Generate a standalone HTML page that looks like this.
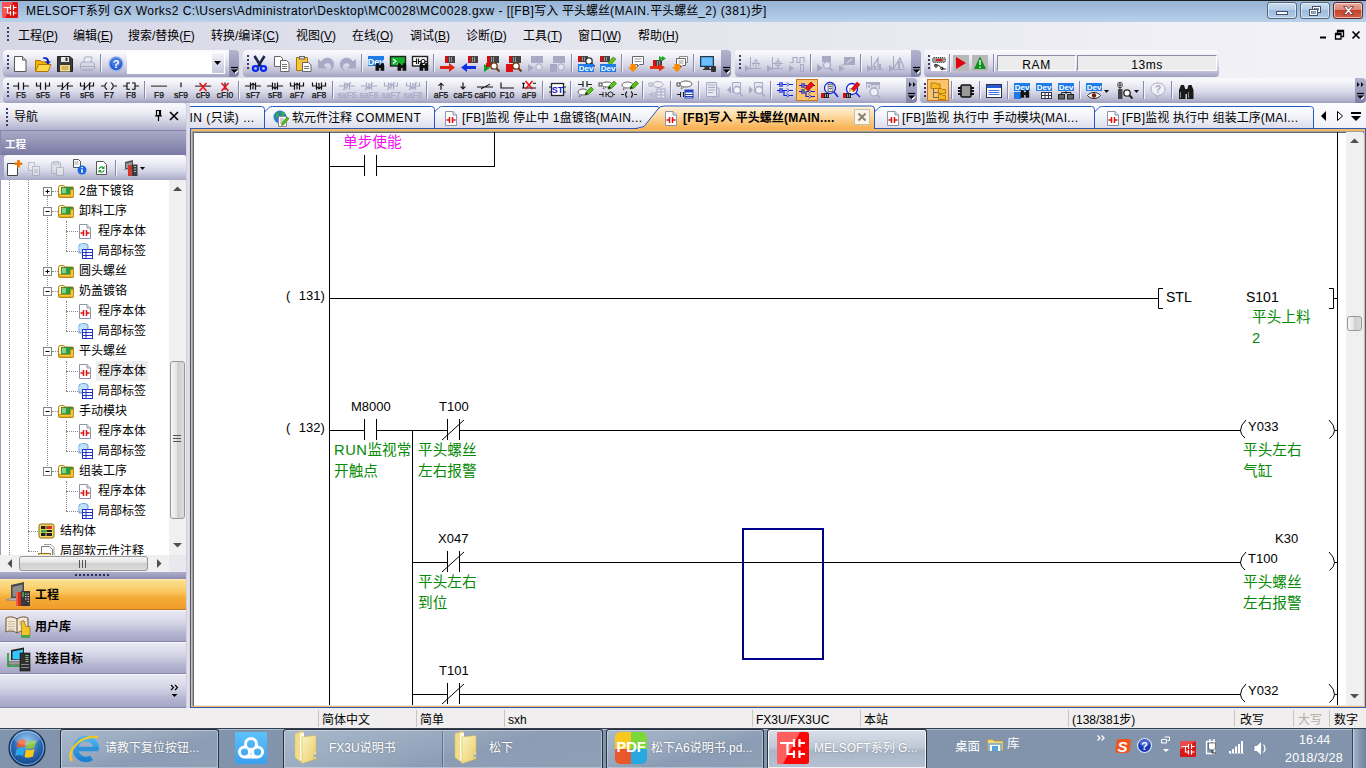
<!DOCTYPE html>
<html lang="zh-CN"><head><meta charset="utf-8"><title>MELSOFT GX Works2</title>
<style>
*{box-sizing:border-box;margin:0;padding:0}
html,body{width:1366px;height:768px;overflow:hidden;background:#e6e6f0}
body{font-family:"Liberation Sans","Noto Sans CJK SC",sans-serif;font-size:12px;color:#000;position:relative}
.a{position:absolute}
.t{position:absolute;white-space:nowrap;line-height:1}
svg{position:absolute;overflow:visible}
#title{left:0;top:0;width:1366px;height:22px;background:linear-gradient(#98b4d5 0,#9fbada 30%,#b9d1ea 100%);border-top:1px solid #1e1e1e}
#menu{left:0;top:22px;width:1366px;height:82px;background:linear-gradient(90deg,#d6d6e5 0,#e2e2ed 30%,#e7e7ef 60%,#efeff5 85%,#f2f2f7 100%)}
.mi{top:30px;font-size:12px}
.grip{width:3px;background-image:radial-gradient(circle at 1px 1px,#3c3c6c 0,#3c3c6c 1px,transparent 1.3px);background-size:3px 4px}
.tb{border-radius:4px 0 0 4px;background:linear-gradient(#fbfbfe 0,#eeeef6 25%,#d9d9e8 55%,#b8b8d2 85%,#9f9fc0 100%)}
.tbcap{border-radius:0 4px 4px 0;background:linear-gradient(#b4b4cf 0,#9d9dbe 50%,#7f7fa6 100%)}
.sep{width:1px;background:#8888aa;box-shadow:1px 0 0 #f4f4fa}

*{box-sizing:border-box;margin:0;padding:0}
html,body{width:1366px;height:768px;overflow:hidden;background:#e6e6f0}
body{font-family:"Liberation Sans","Noto Sans CJK SC",sans-serif;font-size:12px;color:#000;position:relative}
.a{position:absolute}
.t{position:absolute;white-space:nowrap;line-height:1}
svg{position:absolute;overflow:visible}
#title{left:0;top:0;width:1366px;height:22px;background:linear-gradient(#98b4d5 0,#9fbada 30%,#b9d1ea 100%);border-top:1px solid #1e1e1e}
#menu{left:0;top:22px;width:1366px;height:82px;background:linear-gradient(90deg,#d6d6e5 0,#e2e2ed 30%,#e7e7ef 60%,#efeff5 85%,#f2f2f7 100%)}
.mi{top:30px;font-size:12px}
.grip{width:3px;background-image:radial-gradient(circle at 1px 1px,#3c3c6c 0,#3c3c6c 1px,transparent 1.3px);background-size:3px 4px}
.tb{border-radius:4px 0 0 4px;background:linear-gradient(#fbfbfe 0,#eeeef6 25%,#d9d9e8 55%,#b8b8d2 85%,#9f9fc0 100%)}
.tbcap{border-radius:0 4px 4px 0;background:linear-gradient(#b4b4cf 0,#9d9dbe 50%,#7f7fa6 100%)}
.sep{width:1px;background:#8888aa;box-shadow:1px 0 0 #f4f4fa}

.cap svg{left:2px}
.fld{border:1px solid #8c8ca6;border-right-color:#fff;border-bottom-color:#fff;background:#ececec;font-size:12px;letter-spacing:.6px;text-align:center;line-height:17px;padding-top:1px}

.tab{border:1px solid #2458c0;border-radius:3px 3px 0 0;background:linear-gradient(#ffffff 0,#f4f4fa 40%,#dcdcec 100%)}
.tabt{font-size:12px;letter-spacing:.5px}

.tr{font-size:12px;height:20px;line-height:20px}
.vdot{border-left:1px dotted #8a8a8a;width:0}
.hdot{border-top:1px dotted #8a8a8a;height:0}
.nbtn{left:0;width:186px;height:32px;border-top:1px solid #f6f6fb;border-bottom:1px solid #8686a8;background:linear-gradient(#e9e9f3 0,#d4d4e6 40%,#b4b4d0 75%,#a5a5c5 100%)}
.nbt{font-size:13px;font-weight:bold}
.sbtn{background:linear-gradient(90deg,#f4f4f4,#dcdcdc);}

.lb{font-size:13px;color:#000}
.gc{font-size:14.67px;color:#058a05;letter-spacing:0;line-height:21px}

*{box-sizing:border-box;margin:0;padding:0}
html,body{width:1366px;height:768px;overflow:hidden;background:#e6e6f0}
body{font-family:"Liberation Sans","Noto Sans CJK SC",sans-serif;font-size:12px;color:#000;position:relative}
.a{position:absolute}
.t{position:absolute;white-space:nowrap;line-height:1}
svg{position:absolute;overflow:visible}
#title{left:0;top:0;width:1366px;height:22px;background:linear-gradient(#98b4d5 0,#9fbada 30%,#b9d1ea 100%);border-top:1px solid #1e1e1e}
#menu{left:0;top:22px;width:1366px;height:82px;background:linear-gradient(90deg,#d6d6e5 0,#e2e2ed 30%,#e7e7ef 60%,#efeff5 85%,#f2f2f7 100%)}
.mi{top:30px;font-size:12px}
.grip{width:3px;background-image:radial-gradient(circle at 1px 1px,#3c3c6c 0,#3c3c6c 1px,transparent 1.3px);background-size:3px 4px}
.tb{border-radius:4px 0 0 4px;background:linear-gradient(#fbfbfe 0,#eeeef6 25%,#d9d9e8 55%,#b8b8d2 85%,#9f9fc0 100%)}
.tbcap{border-radius:0 4px 4px 0;background:linear-gradient(#b4b4cf 0,#9d9dbe 50%,#7f7fa6 100%)}
.sep{width:1px;background:#8888aa;box-shadow:1px 0 0 #f4f4fa}

.tbtn{top:729px;height:39px;border:1px solid #27313f;border-bottom:none;border-radius:3px 3px 0 0;background:linear-gradient(165deg,#a9b8ca 0,#98a9bf 40%,#8b9cb4 60%,#8e9fb6 100%);box-shadow:inset 0 0 0 1px rgba(255,255,255,.35)}
.tt{color:#fff;font-size:12px;top:742px;text-shadow:0 0 2px rgba(0,0,0,.35)}
</style></head>
<body>
<!-- chrome.title -->
<div class="a" id="title"></div>
<svg style="left:2px;top:2px;" width="17" height="17" viewBox="0 0 17 17"><rect x="0" y="0" width="16" height="16" rx="1" fill="#e01010"/><path d="M0 0h11l-8 16h-3z" fill="#ff7070" opacity=".7"/><path d="M1.5 5.5h7M8.5 3v5M11.5 3v5M11.5 5.5h3M5.5 5.5v5.5h3M8.5 9v4.5M11.5 9v4.5M11.5 11h3" stroke="#fff" stroke-width="1.2" fill="none"/></svg>
<div class="t ttl" style="left:26px;top:5px;font-size:12px;color:#000;letter-spacing:.455px">MELSOFT<span style="letter-spacing:0">系列</span> GX Works2 C:\Users\Administrator\Desktop\MC0028\MC0028.gxw - [[FB]<span style="letter-spacing:0">写入</span> <span style="letter-spacing:0">平头螺丝</span>(MAIN.<span style="letter-spacing:0">平头螺丝</span>_2) (381)<span style="letter-spacing:0">步</span>]</div>
<div class="a " style="left:1267px;top:2px;width:30px;height:17px;background:linear-gradient(#c9dcf0 0,#b6cde8 45%,#9dbbdd 50%,#b3cce8 100%);border:1px solid #56667c;border-radius:3px;box-shadow:inset 0 0 0 1px rgba(255,255,255,.55)"></div>
<div class="a " style="left:1300px;top:2px;width:30px;height:17px;background:linear-gradient(#c9dcf0 0,#b6cde8 45%,#9dbbdd 50%,#b3cce8 100%);border:1px solid #56667c;border-radius:3px;box-shadow:inset 0 0 0 1px rgba(255,255,255,.55)"></div>
<div class="a " style="left:1333px;top:2px;width:30px;height:17px;background:linear-gradient(#e9a99b 0,#d9887a 45%,#c8402c 50%,#d4604a 100%);border:1px solid #5a2a2a;border-radius:3px;box-shadow:inset 0 0 0 1px rgba(255,255,255,.55)"></div>
<svg style="left:1267px;top:2px;" width="30" height="17" viewBox="0 0 30 17"><rect x="9.5" y="9.5" width="11" height="3" fill="#fff" stroke="#44506a" stroke-width="1"/></svg>
<svg style="left:1300px;top:2px;" width="30" height="17" viewBox="0 0 30 17"><rect x="12.5" y="4.500" width="8" height="6" fill="#fff" stroke="#44506a"/><rect x="14.5" y="6.500" width="4" height="2" fill="#a9c3e2" stroke="#44506a" stroke-width=".6"/><rect x="9.500" y="7.500" width="8" height="6" fill="#fff" stroke="#44506a"/><rect x="11.500" y="9.500" width="4" height="2" fill="#a9c3e2" stroke="#44506a" stroke-width=".6"/></svg>
<svg style="left:1333px;top:2px;" width="30" height="17" viewBox="0 0 30 17"><path d="M10.500 4.500l3 0l2 2.500l2-2.500l3 0l-3.500 4l3.500 4l-3 0l-2-2.500l-2 2.500l-3 0l3.500-4z" fill="#fff" stroke="#5a3030" stroke-width=".8"/></svg>
<!-- chrome.menu -->
<div class="a" id="menu"></div>
<div class="a grip" style="left:7px;top:27px;width:3px;height:16px;"></div>
<div class="t mi" style="left:18px;top:30px;font-size:12px;">工程(<u>P</u>)</div>
<div class="t mi" style="left:73px;top:30px;font-size:12px;">编辑(<u>E</u>)</div>
<div class="t mi" style="left:128px;top:30px;font-size:12px;">搜索/替换(<u>F</u>)</div>
<div class="t mi" style="left:211px;top:30px;font-size:12px;">转换/编译(<u>C</u>)</div>
<div class="t mi" style="left:296px;top:30px;font-size:12px;">视图(<u>V</u>)</div>
<div class="t mi" style="left:352px;top:30px;font-size:12px;">在线(<u>O</u>)</div>
<div class="t mi" style="left:410px;top:30px;font-size:12px;">调试(<u>B</u>)</div>
<div class="t mi" style="left:466px;top:30px;font-size:12px;">诊断(<u>D</u>)</div>
<div class="t mi" style="left:523px;top:30px;font-size:12px;">工具(<u>T</u>)</div>
<div class="t mi" style="left:578px;top:30px;font-size:12px;">窗口(<u>W</u>)</div>
<div class="t mi" style="left:638px;top:30px;font-size:12px;">帮助(<u>H</u>)</div>
<svg style="left:1316px;top:28px;" width="50" height="14" viewBox="0 0 50 14"><path d="M4 9.5h6" stroke="#000" stroke-width="2"/><path d="M19.5 5.5h5.500v5.500h-5.500zM19.500 6.500h5.500M21.500 5.500v-3h6v6h-2.500M21.500 3.500h6" fill="none" stroke="#000" stroke-width="1.300"/><path d="M36.5 3.5l7 7M43.5 3.5l-7 7" stroke="#000" stroke-width="1.700"/></svg>
<!-- toolbars.row1 -->
<div class="a tb" style="left:3px;top:50px;width:226px;height:27px;"></div><div class="a tbcap" style="left:229px;top:50px;width:10px;height:27px;"></div><svg style="left:231px;top:67px;" width="8" height="8" viewBox="0 0 8 8"><path d="M1 2.500h6l-3 3.500z" fill="#fff" transform="translate(.7,.9)"/><path d="M0 .5h7" stroke="#000" stroke-width="1.200"/><path d="M0 2.500h7l-3.500 3.500z" fill="#000"/></svg><div class="a grip" style="left:6.5px;top:55px;width:3px;height:16px;"></div>
<svg style="left:13px;top:56px;" width="16" height="16" viewBox="0 0 16 16"><path d="M1.500 .5h8l3.500 3.500v11.500h-11.500z" fill="#fff" stroke="#555"/><path d="M9.500 .5v3.500h3.500" fill="#ddd" stroke="#555"/></svg>
<svg style="left:35px;top:56px;" width="16" height="16" viewBox="0 0 16 16"><path d="M.5 15.500v-11h5l1.500 1.500h6v3" fill="#f5b400" stroke="#b07800"/><path d="M.5 15.500l3-7h12.500l-3 7z" fill="#ffd84a" stroke="#b07800"/><path d="M8 1.500c4-1 6 1 6 4h2l-3 3-3-3h2c0-2-1.500-3-4-2.500z" fill="#0020c0"/></svg>
<svg style="left:57px;top:56px;" width="16" height="16" viewBox="0 0 16 16"><path d="M.5 .5h12.500l2.500 2.500v12.500h-15z" fill="#3a3a3a" stroke="#222"/><rect x="4" y="1" width="8" height="5" fill="#e8e8e8"/><rect x="8.500" y="1.500" width="2" height="3.500" fill="#3a3a3a"/><rect x="3" y="9" width="10" height="6.500" fill="#f4dc8a"/><path d="M4.500 11h7M4.500 13h7" stroke="#b09040"/></svg>
<svg style="left:79px;top:56px;" width="16" height="16" viewBox="0 0 16 16"><path d="M4.500 6.500l1.500-5.500h7l-1.500 5.500" fill="#eee" stroke="#a9a9c6"/><path d="M1.500 7.500l2-1.500h10l2 1.500v5.500h-14z" fill="#d8d8e4" stroke="#a9a9c6"/><path d="M1.500 10.500h14M3 14.500h11" stroke="#a9a9c6"/></svg>
<div class="a sep" style="left:100px;top:54px;width:1px;height:18px;"></div>
<svg style="left:108px;top:56px;" width="16" height="16" viewBox="0 0 16 16"><circle cx="8" cy="8" r="7" fill="#2a5fd0" stroke="#9db8ea" stroke-width="1.500"/><circle cx="8" cy="6" r="5" fill="#5a8bea" opacity=".6"/><text x="8" y="12" font-size="11" font-weight="bold" text-anchor="middle" fill="#fff" font-family="Liberation Sans,sans-serif">?</text></svg>
<div class="a " style="left:127px;top:52px;width:98px;height:22px;background:#fff;"></div>
<div class="a " style="left:212px;top:53px;width:12px;height:20px;background:linear-gradient(#f4f4fa,#c4c4dc);"></div>
<svg style="left:214px;top:61px;" width="8" height="5" viewBox="0 0 8 5"><path d="M0 0h7l-3.500 4z" fill="#000"/></svg>
<div class="a tb" style="left:243px;top:50px;width:478px;height:27px;"></div><div class="a tbcap" style="left:721px;top:50px;width:10px;height:27px;"></div><svg style="left:723px;top:67px;" width="8" height="8" viewBox="0 0 8 8"><path d="M1 2.500h6l-3 3.500z" fill="#fff" transform="translate(.7,.9)"/><path d="M0 .5h7" stroke="#000" stroke-width="1.200"/><path d="M0 2.500h7l-3.500 3.500z" fill="#000"/></svg><div class="a grip" style="left:246.5px;top:55px;width:3px;height:16px;"></div>
<svg style="left:252px;top:56px;" width="16" height="16" viewBox="0 0 16 16"><path d="M2.5 0l6.5 10.5M12.5 0l-6.500 10.5" stroke="#1a2850" stroke-width="2.6"/><ellipse cx="3.5" cy="12.5" rx="2.6" ry="2.300" fill="none" stroke="#0828f0" stroke-width="2.2"/><ellipse cx="11.5" cy="12.5" rx="2.6" ry="2.300" fill="none" stroke="#0828f0" stroke-width="2.2"/></svg>
<svg style="left:274px;top:56px;" width="16" height="16" viewBox="0 0 16 16"><path d="M.5 .5h6l2 2v8h-8z" fill="#fff" stroke="#666"/><path d="M6.500 4.500h6l2.500 2.500v8.500h-8.500z" fill="#fff" stroke="#666"/><path d="M8 8.500h5M8 10.500h5M8 12.500h5" stroke="#777"/></svg>
<svg style="left:296px;top:56px;" width="16" height="16" viewBox="0 0 16 16"><path d="M.5 1.500h11v13h-11z" fill="#f7c440" stroke="#a87800"/><rect x="3.500" y=".5" width="5" height="2.500" fill="#ddd" stroke="#666"/><path d="M6.500 6.500h6l2.500 2.500v6.500h-8.500z" fill="#fff" stroke="#666"/><path d="M8 10.500h5M8 12.500h5" stroke="#777"/></svg>
<svg style="left:318px;top:56px;" width="16" height="16" viewBox="0 0 16 16"><path d="M0 3v9.5h9l-3-3c1.500-2.500 5-3 6.5-.5 1.200 2 .5 4-1 6 5-2.500 6-8 2.500-11.500-3.500-3-8.500-2-11 2z" fill="#a9a9c6"/></svg>
<svg style="left:340px;top:56px;" width="16" height="16" viewBox="0 0 16 16"><g transform="translate(16,0) scale(-1,1)"><path d="M0 3v9.5h9l-3-3c1.500-2.500 5-3 6.5-.5 1.200 2 .5 4-1 6 5-2.500 6-8 2.500-11.500-3.500-3-8.500-2-11 2z" fill="#a9a9c6"/></g></svg>
<div class="a sep" style="left:361px;top:54px;width:1px;height:18px;"></div>
<svg style="left:368px;top:56px;" width="16" height="16" viewBox="0 0 16 16"><rect x="0" y="0" width="16" height="10" fill="#1e7be8"/><text x="8.0" y="8.5" font-size="9" text-anchor="middle" fill="#fff" font-weight="bold" font-family="Liberation Sans,sans-serif">Dev</text><g transform="translate(7.5,6.5) scale(.92)"><path d="M0 9v-6l1-2.500h2l1 2.500v6zM5.500 9v-6l1-2.500h2l1 2.500v6zM3 3h4v3h-4z" fill="#111"/></g></svg>
<svg style="left:390px;top:56px;" width="16" height="16" viewBox="0 0 16 16"><rect x=".5" y=".5" width="15" height="9.500" fill="#12b02c" stroke="#222" stroke-width="1.400"/><path d="M3 3l3 2.200-3 2.200M7 8h4" stroke="#fff" fill="none" stroke-width="1.200"/><g transform="translate(7.5,6.5) scale(.92)"><path d="M0 9v-6l1-2.500h2l1 2.500v6zM5.500 9v-6l1-2.500h2l1 2.500v6zM3 3h4v3h-4z" fill="#111"/></g></svg>
<svg style="left:412px;top:56px;" width="16" height="16" viewBox="0 0 16 16"><rect x=".5" y=".5" width="15" height="9.500" fill="#fff" stroke="#222" stroke-width="1.400"/><path d="M1 5.500h3.500M4.500 2.500v5.500M6.500 2.500v5.500M6.500 5.500h2.500M13 5.500h2" stroke="#111" stroke-width="1.200"/><circle cx="11" cy="5.500" r="2" fill="none" stroke="#111" stroke-width="1.200"/><g transform="translate(7.5,6.5) scale(.92)"><path d="M0 9v-6l1-2.500h2l1 2.500v6zM5.500 9v-6l1-2.500h2l1 2.500v6zM3 3h4v3h-4z" fill="#111"/></g></svg>
<div class="a sep" style="left:433px;top:54px;width:1px;height:18px;"></div>
<svg style="left:440px;top:56px;" width="16" height="16" viewBox="0 0 16 16"><rect x="5" y="0" width="10" height="7" fill="#444"/><rect x="5" y="0" width="3" height="7" fill="#d01010"/><path d="M9.5 1v5M11.5 1v5" stroke="#999"/><path d="M0 10h9v-3l6 4.500-6 4.500v-3h-9z" fill="#e02010"/></svg>
<svg style="left:462px;top:56px;" width="16" height="16" viewBox="0 0 16 16"><rect x="6" y="0" width="10" height="7" fill="#444"/><rect x="6" y="0" width="3" height="7" fill="#d01010"/><path d="M10.5 1v5M12.5 1v5" stroke="#999"/><path d="M16 10h-9v-3l-6 4.500 6 4.500v-3h9z" fill="#1030e0" transform="translate(-2,0)"/></svg>
<svg style="left:484px;top:56px;" width="16" height="16" viewBox="0 0 16 16"><rect x="3" y="0" width="12" height="7" fill="#444"/><rect x="3" y="0" width="3" height="7" fill="#d01010"/><path d="M7.5 1v5M9.5 1v5" stroke="#999"/><path d="M0 8l6 4-6 4z" fill="#10a020"/><rect x="2" y="7" width="5" height="4" fill="#d01010"/><circle cx="10" cy="10" r="3.200" fill="#fff" stroke="#6a3a10" stroke-width="1.300"/><path d="M12.3 12.3l3.200 3.200" stroke="#6a3a10" stroke-width="2"/></svg>
<svg style="left:506px;top:56px;" width="16" height="16" viewBox="0 0 16 16"><rect x="3" y="0" width="12" height="7" fill="#444"/><rect x="3" y="0" width="3" height="7" fill="#d01010"/><path d="M7.5 1v5M9.5 1v5" stroke="#999"/><rect x="0" y="8" width="7" height="8" fill="#e01010"/><circle cx="10" cy="10" r="3.200" fill="#fff" stroke="#6a3a10" stroke-width="1.300"/><path d="M12.3 12.3l3.200 3.200" stroke="#6a3a10" stroke-width="2"/></svg>
<svg style="left:528px;top:56px;" width="16" height="16" viewBox="0 0 16 16"><rect x="3" y="0" width="12" height="7" fill="#a9a9c6"/><path d="M0 8l6 4-6 4z" fill="#a9a9c6"/><circle cx="11" cy="11" r="3.200" fill="#e4e4ee" stroke="#a9a9c6"/></svg>
<svg style="left:550px;top:56px;" width="16" height="16" viewBox="0 0 16 16"><rect x="3" y="0" width="12" height="7" fill="#a9a9c6"/><rect x="0" y="8" width="7" height="8" fill="#a9a9c6"/><circle cx="11" cy="11" r="3.200" fill="#e4e4ee" stroke="#a9a9c6"/></svg>
<div class="a sep" style="left:571px;top:54px;width:1px;height:18px;"></div>
<svg style="left:578px;top:56px;" width="16" height="16" viewBox="0 0 16 16"><rect x="0" y="0" width="10" height="6" fill="#444"/><rect x="0" y="0" width="3" height="6" fill="#d01010"/><path d="M4.5 1v4M6.5 1v4" stroke="#999"/><circle cx="11" cy="5" r="3.200" fill="#fff" stroke="#333" stroke-width="1.300"/><path d="M13.3 7.3l3.200 3.200" stroke="#333" stroke-width="2"/><rect x="0" y="8" width="16" height="8" fill="#1e7be8"/><text x="8.0" y="15" font-size="8" text-anchor="middle" fill="#fff" font-weight="bold" font-family="Liberation Sans,sans-serif">Dev</text></svg>
<svg style="left:600px;top:56px;" width="16" height="16" viewBox="0 0 16 16"><rect x="0" y="0" width="10" height="6" fill="#444"/><rect x="0" y="0" width="3" height="6" fill="#d01010"/><path d="M4.5 1v4M6.5 1v4" stroke="#999"/><path d="M8 7l5-6 3 2-5 6z" fill="#60c020" stroke="#3a8010" stroke-width=".6"/><rect x="0" y="8" width="16" height="8" fill="#1e7be8"/><text x="8.0" y="15" font-size="8" text-anchor="middle" fill="#fff" font-weight="bold" font-family="Liberation Sans,sans-serif">Dev</text></svg>
<div class="a sep" style="left:621px;top:54px;width:1px;height:18px;"></div>
<svg style="left:628px;top:56px;" width="16" height="16" viewBox="0 0 16 16"><path d="M4.500 .5h11v8h-4l-2 2v-2h-5z" fill="#fff" stroke="#666"/><path d="M6.500 3h7M6.500 5.500h7" stroke="#999"/><path d="M1 8h5v3h2.500l-5 5-5-5h2.500z" fill="#ff8a00" transform="translate(1.500,0)"/></svg>
<svg style="left:650px;top:56px;" width="16" height="16" viewBox="0 0 16 16"><rect x="3" y="4" width="9" height="7" fill="#444"/><rect x="3" y="4" width="3" height="7" fill="#d01010"/><path d="M7.5 5v5M9.5 5v5" stroke="#999"/><path d="M9 0l4 2.500-4 2.500zM12 0l4 2.500-4 2.500z" fill="#18a818"/><path d="M0 11h9v-2.500l6 4-6 4v-2.500h-9z" fill="#e83010" transform="translate(0,-1)"/></svg>
<svg style="left:672px;top:56px;" width="16" height="16" viewBox="0 0 16 16"><path d="M7.500 .5h8v6h-8z" fill="#fff" stroke="#888"/><path d="M4.500 2.500h9v7h-3l-2 2v-2h-4z" fill="#fff" stroke="#666"/><path d="M6.500 5h5M6.500 7h5" stroke="#999"/><path d="M1 8h5v3h2.500l-5 5-5-5h2.500z" fill="#ff8a00" transform="translate(1.500,0)"/></svg>
<div class="a sep" style="left:693px;top:54px;width:1px;height:18px;"></div>
<svg style="left:700px;top:56px;" width="16" height="16" viewBox="0 0 16 16"><rect x=".5" y=".5" width="13" height="10" fill="#3aa0f0" stroke="#333"/><rect x="2" y="2" width="10" height="7" fill="#6cc0ff"/><path d="M5 11h4v2h-4zM3 13.500h8" stroke="#333" fill="#333"/><rect x="11" y="10" width="5" height="6" rx="1" fill="#333"/></svg>
<div class="a tb" style="left:735px;top:50px;width:176px;height:27px;"></div><div class="a tbcap" style="left:911px;top:50px;width:10px;height:27px;"></div><svg style="left:913px;top:67px;" width="8" height="8" viewBox="0 0 8 8"><path d="M1 2.500h6l-3 3.500z" fill="#fff" transform="translate(.7,.9)"/><path d="M0 .5h7" stroke="#000" stroke-width="1.200"/><path d="M0 2.500h7l-3.500 3.500z" fill="#000"/></svg><div class="a grip" style="left:738.5px;top:55px;width:3px;height:16px;"></div>
<svg style="left:745px;top:56px;" width="16" height="16" viewBox="0 0 16 16"><path d="M0 9l5 3.500-5 3.500z" fill="#a9a9c6"/><path d="M5.500 1v13M3 12.500h13M7 7.500h8M11 3v9" stroke="#a9a9c6" fill="none"/><path d="M8 10c1-8 4-8 6 0" stroke="#a9a9c6" fill="none"/></svg>
<svg style="left:767px;top:56px;" width="16" height="16" viewBox="0 0 16 16"><path d="M0 9l5 3.500-5 3.500z" fill="#a9a9c6"/><path d="M5.500 1v13M3 12.500h13M6 7.500h10M11 2v10" stroke="#a9a9c6" fill="none"/><circle cx="11" cy="7.500" r="2.500" stroke="#a9a9c6" fill="none"/></svg>
<svg style="left:789px;top:56px;" width="16" height="16" viewBox="0 0 16 16"><path d="M0 9l5 3.500-5 3.500z" fill="#a9a9c6"/><path d="M1 6.500h3v-5h4v5h3v-5h4v5" stroke="#a9a9c6" fill="none" stroke-width="1.200"/><rect x="11.500" y="8.500" width="3" height="7" fill="none" stroke="#a9a9c6"/></svg>
<div class="a sep" style="left:810px;top:54px;width:1px;height:18px;"></div>
<svg style="left:817px;top:56px;" width="16" height="16" viewBox="0 0 16 16"><path d="M0 8l6 4-6 4z" fill="#a9a9c6"/><rect x="5" y="0" width="9" height="6" fill="#a9a9c6"/><circle cx="10" cy="9" r="3.500" fill="#e4e4ee" stroke="#a9a9c6" stroke-width="1.300"/><path d="M12.500 11.500l3 3.500" stroke="#a9a9c6" stroke-width="1.800"/></svg>
<svg style="left:839px;top:56px;" width="16" height="16" viewBox="0 0 16 16"><path d="M0 9l6 3.500-6 3.500z" fill="#a9a9c6"/><rect x="5" y="1" width="11" height="8" fill="#a9a9c6"/><path d="M8 7l5-4" stroke="#e8e8f0"/><path d="M2 9h4v-4" stroke="#a9a9c6" fill="none"/></svg>
<div class="a sep" style="left:860px;top:54px;width:1px;height:18px;"></div>
<svg style="left:867px;top:56px;" width="16" height="16" viewBox="0 0 16 16"><path d="M0 9l5 3.500-5 3.500z" fill="#a9a9c6"/><path d="M4.500 0v14M3 13.500h13" stroke="#a9a9c6"/><path d="M5 12l6-10v10" stroke="#a9a9c6" fill="none" stroke-width="1.300"/><path d="M8 10v3M13 8v5" stroke="#a9a9c6" stroke-width="2"/></svg>
<svg style="left:889px;top:56px;" width="16" height="16" viewBox="0 0 16 16"><path d="M0 9l5 3.500-5 3.500z" fill="#a9a9c6"/><path d="M4.500 0v14M3 13.500h13" stroke="#a9a9c6"/><path d="M5 12l6-10l4 10" stroke="#a9a9c6" fill="none" stroke-width="1.300"/><path d="M10 7v6" stroke="#a9a9c6" stroke-width="2"/><path d="M10 4l2 3h-4z" fill="#a9a9c6"/></svg>
<div class="a tb" style="left:924px;top:50px;width:295px;height:27px;border-radius:4px"></div><div class="a grip" style="left:927.5px;top:55px;width:3px;height:16px;"></div>
<svg style="left:931px;top:55px;" width="16" height="16" viewBox="0 0 16 16"><rect x="0" y="0" width="16" height="16" fill="#fff"/><rect x="1.500" y="2.500" width="13" height="5" rx="1.500" fill="#999" stroke="#444" stroke-dasharray="1 1"/><path d="M5 5h5" stroke="#e00000" stroke-width="1.500"/><path d="M9 3.500l3 1.500-3 1.500z" fill="#e00000"/><path d="M3 10h4l5 4h3" stroke="#222" fill="none"/><circle cx="5" cy="11" r="1.300" fill="none" stroke="#222"/><circle cx="11" cy="13.500" r="1.300" fill="none" stroke="#222"/></svg>
<div class="a sep" style="left:949px;top:54px;width:1px;height:18px;"></div>
<svg style="left:953px;top:55px;" width="16" height="16" viewBox="0 0 16 16"><rect width="16" height="16" fill="#b8b8b8"/><path d="M3 2l10 6-10 6z" fill="#e00010"/></svg>
<svg style="left:972px;top:55px;" width="16" height="16" viewBox="0 0 16 16"><rect width="16" height="16" fill="#b8b8b8"/><path d="M8 1.500l6 12.500h-12z" fill="#10901c"/><path d="M8 5v5M8 11.500v1.500" stroke="#e8ffe8" stroke-width="1.400"/></svg>
<div class="a sep" style="left:993px;top:54px;width:1px;height:18px;"></div>
<div class="a fld" style="left:997px;top:55px;width:79px;height:16px">RAM</div>
<div class="a fld" style="left:1077px;top:55px;width:140px;height:16px">13ms</div>
<!-- toolbars.row2 -->
<div class="a tb" style="left:3px;top:78px;width:903px;height:25px;"></div><div class="a tbcap" style="left:906px;top:78px;width:11px;height:25px;"></div><svg style="left:908px;top:93px;" width="8" height="8" viewBox="0 0 8 8"><path d="M1 2.500h6l-3 3.500z" fill="#fff" transform="translate(.7,.9)"/><path d="M0 .5h7" stroke="#000" stroke-width="1.200"/><path d="M0 2.500h7l-3.500 3.500z" fill="#000"/></svg><div class="a grip" style="left:6.5px;top:83px;width:3px;height:14px;"></div>
<svg style="left:909px;top:82px;" width="8" height="6" viewBox="0 0 8 6"><path d="M0 0l2.500 2.500-2.500 2.500zM4 0l2.500 2.500-2.500 2.500z" fill="#000"/></svg>
<svg style="left:13px;top:78px;" width="16" height="22" viewBox="0 0 16 22"><g transform="translate(0,4.500) scale(1,.8)" stroke="#111" fill="none" stroke-width="1.200"><path d="M0 4.500h5M5.500 0v9M10.500 0v9M11 4.500h5" /></g><text x="8" y="19.8" font-size="8.5" text-anchor="middle" fill="#111" stroke="#111" stroke-width=".25" font-family="Liberation Sans,sans-serif">F5</text></svg>
<svg style="left:35px;top:78px;" width="16" height="22" viewBox="0 0 16 22"><g transform="translate(0,4.500) scale(1,.8)" stroke="#111" fill="none" stroke-width="1.200"><path d="M1.500 0v4.500h4M5.500 0v9M10.500 0v9M10.500 4.500h4v-4.500" /></g><text x="8" y="19.8" font-size="8.5" text-anchor="middle" fill="#111" stroke="#111" stroke-width=".25" font-family="Liberation Sans,sans-serif">sF5</text></svg>
<svg style="left:57px;top:78px;" width="16" height="22" viewBox="0 0 16 22"><g transform="translate(0,4.500) scale(1,.8)" stroke="#111" fill="none" stroke-width="1.200"><path d="M0 4.500h5M5.500 0v9M10.500 0v9M11 4.500h5" /><path d="M4 9l8-9" /></g><text x="8" y="19.8" font-size="8.5" text-anchor="middle" fill="#111" stroke="#111" stroke-width=".25" font-family="Liberation Sans,sans-serif">F6</text></svg>
<svg style="left:79px;top:78px;" width="16" height="22" viewBox="0 0 16 22"><g transform="translate(0,4.500) scale(1,.8)" stroke="#111" fill="none" stroke-width="1.200"><path d="M1.500 0v4.500h4M5.500 0v9M10.500 0v9M10.500 4.500h4v-4.500" /><path d="M4 9l8-9" /></g><text x="8" y="19.8" font-size="8.5" text-anchor="middle" fill="#111" stroke="#111" stroke-width=".25" font-family="Liberation Sans,sans-serif">sF6</text></svg>
<svg style="left:101px;top:78px;" width="16" height="22" viewBox="0 0 16 22"><g transform="translate(0,4.500) scale(1,.8)" stroke="#111" fill="none" stroke-width="1.200"><path d="M0 4.500h3M6 0c-3 2.500-3 6.500 0 9M10 0c3 2.500 3 6.500 0 9M13 4.500h3" /></g><text x="8" y="19.8" font-size="8.5" text-anchor="middle" fill="#111" stroke="#111" stroke-width=".25" font-family="Liberation Sans,sans-serif">F7</text></svg>
<svg style="left:123px;top:78px;" width="16" height="22" viewBox="0 0 16 22"><g transform="translate(0,4.500) scale(1,.8)" stroke="#111" fill="none" stroke-width="1.200"><path d="M0 4.500h4M7 .5h-3v8h3M9 .5h3v8h-3M12 4.500h4" /></g><text x="8" y="19.8" font-size="8.5" text-anchor="middle" fill="#111" stroke="#111" stroke-width=".25" font-family="Liberation Sans,sans-serif">F8</text></svg>
<div class="a sep" style="left:144px;top:81px;width:1px;height:18px;"></div>
<svg style="left:151px;top:78px;" width="16" height="22" viewBox="0 0 16 22"><g transform="translate(0,4.500) scale(1,.8)" stroke="#111" fill="none" stroke-width="1.200"><path d="M0 4.500h16" /></g><text x="8" y="19.8" font-size="8.5" text-anchor="middle" fill="#111" stroke="#111" stroke-width=".25" font-family="Liberation Sans,sans-serif">F9</text></svg>
<svg style="left:173px;top:78px;" width="16" height="22" viewBox="0 0 16 22"><g transform="translate(0,4.500) scale(1,.8)" stroke="#111" fill="none" stroke-width="1.200"><path d="M8 0v6" /></g><text x="8" y="19.8" font-size="8.5" text-anchor="middle" fill="#111" stroke="#111" stroke-width=".25" font-family="Liberation Sans,sans-serif">sF9</text></svg>
<svg style="left:195px;top:78px;" width="16" height="22" viewBox="0 0 16 22"><g transform="translate(0,4.500) scale(1,.8)" stroke="#111" fill="none" stroke-width="1.200"><path d="M0 4.500h16" /></g><path d="M4.500 5l7 8M11.500 5l-7 8" stroke="#e81010" stroke-width="1.500"/><text x="8" y="19.8" font-size="8.5" text-anchor="middle" fill="#111" stroke="#111" stroke-width=".25" font-family="Liberation Sans,sans-serif">cF9</text></svg>
<svg style="left:217px;top:78px;" width="16" height="22" viewBox="0 0 16 22"><g transform="translate(0,4.500) scale(1,.8)" stroke="#111" fill="none" stroke-width="1.200"><path d="M8 0v9" /></g><path d="M4.500 5l7 8M11.500 5l-7 8" stroke="#e81010" stroke-width="1.500"/><text x="8" y="19.8" font-size="8.5" text-anchor="middle" fill="#111" stroke="#111" stroke-width=".25" font-family="Liberation Sans,sans-serif">cFI0</text></svg>
<div class="a sep" style="left:238px;top:81px;width:1px;height:18px;"></div>
<svg style="left:245px;top:78px;" width="16" height="22" viewBox="0 0 16 22"><g transform="translate(0,4.500) scale(1,.8)" stroke="#111" fill="none" stroke-width="1.200"><path d="M0 4.500h5M5.500 0v9M10.500 0v9M11 4.500h5" /><path d="M8 8.500v-7M6 3.500l2-2.500 2 2.500" /></g><text x="8" y="19.8" font-size="8.5" text-anchor="middle" fill="#111" stroke="#111" stroke-width=".25" font-family="Liberation Sans,sans-serif">sF7</text></svg>
<svg style="left:267px;top:78px;" width="16" height="22" viewBox="0 0 16 22"><g transform="translate(0,4.500) scale(1,.8)" stroke="#111" fill="none" stroke-width="1.200"><path d="M0 4.500h5M5.500 0v9M10.500 0v9M11 4.500h5" /><path d="M8 .5v7M6 5.500l2 2.500 2-2.500" /></g><text x="8" y="19.8" font-size="8.5" text-anchor="middle" fill="#111" stroke="#111" stroke-width=".25" font-family="Liberation Sans,sans-serif">sF8</text></svg>
<svg style="left:289px;top:78px;" width="16" height="22" viewBox="0 0 16 22"><g transform="translate(0,4.500) scale(1,.8)" stroke="#111" fill="none" stroke-width="1.200"><path d="M1.500 0v4.500h4M5.500 0v9M10.500 0v9M10.500 4.500h4v-4.500" /><path d="M8 8.500v-7M6 3.500l2-2.500 2 2.500" /></g><text x="8" y="19.8" font-size="8.5" text-anchor="middle" fill="#111" stroke="#111" stroke-width=".25" font-family="Liberation Sans,sans-serif">aF7</text></svg>
<svg style="left:311px;top:78px;" width="16" height="22" viewBox="0 0 16 22"><g transform="translate(0,4.500) scale(1,.8)" stroke="#111" fill="none" stroke-width="1.200"><path d="M1.500 0v4.500h4M5.500 0v9M10.500 0v9M10.500 4.500h4v-4.500" /><path d="M8 .5v7M6 5.500l2 2.500 2-2.500" /></g><text x="8" y="19.8" font-size="8.5" text-anchor="middle" fill="#111" stroke="#111" stroke-width=".25" font-family="Liberation Sans,sans-serif">aF8</text></svg>
<div class="a sep" style="left:332px;top:81px;width:1px;height:18px;"></div>
<svg style="left:339px;top:78px;" width="16" height="22" viewBox="0 0 16 22"><g transform="translate(0,4.500) scale(1,.8)" stroke="#a9a9c6" fill="none" stroke-width="1.200"><path d="M0 4.500h5M5.500 0v9M10.500 0v9M11 4.500h5" /><path d="M8 8.500v-7M6 3.500l2-2.500 2 2.500" /><path d="M4 9l8-9" /></g><text x="8" y="19.8" font-size="8.5" text-anchor="middle" fill="#a9a9c6" stroke="#a9a9c6" stroke-width=".25" font-family="Liberation Sans,sans-serif">saF5</text></svg>
<svg style="left:361px;top:78px;" width="16" height="22" viewBox="0 0 16 22"><g transform="translate(0,4.500) scale(1,.8)" stroke="#a9a9c6" fill="none" stroke-width="1.200"><path d="M0 4.500h5M5.500 0v9M10.500 0v9M11 4.500h5" /><path d="M8 .5v7M6 5.500l2 2.500 2-2.500" /><path d="M4 9l8-9" /></g><text x="8" y="19.8" font-size="8.5" text-anchor="middle" fill="#a9a9c6" stroke="#a9a9c6" stroke-width=".25" font-family="Liberation Sans,sans-serif">saF6</text></svg>
<svg style="left:383px;top:78px;" width="16" height="22" viewBox="0 0 16 22"><g transform="translate(0,4.500) scale(1,.8)" stroke="#a9a9c6" fill="none" stroke-width="1.200"><path d="M1.500 0v4.500h4M5.500 0v9M10.500 0v9M10.500 4.500h4v-4.500" /><path d="M8 8.500v-7M6 3.500l2-2.500 2 2.500" /><path d="M4 9l8-9" /></g><text x="8" y="19.8" font-size="8.5" text-anchor="middle" fill="#a9a9c6" stroke="#a9a9c6" stroke-width=".25" font-family="Liberation Sans,sans-serif">saF7</text></svg>
<svg style="left:405px;top:78px;" width="16" height="22" viewBox="0 0 16 22"><g transform="translate(0,4.500) scale(1,.8)" stroke="#a9a9c6" fill="none" stroke-width="1.200"><path d="M1.500 0v4.500h4M5.500 0v9M10.500 0v9M10.500 4.500h4v-4.500" /><path d="M8 .5v7M6 5.500l2 2.500 2-2.500" /><path d="M4 9l8-9" /></g><text x="8" y="19.8" font-size="8.5" text-anchor="middle" fill="#a9a9c6" stroke="#a9a9c6" stroke-width=".25" font-family="Liberation Sans,sans-serif">saF8</text></svg>
<div class="a sep" style="left:426px;top:81px;width:1px;height:18px;"></div>
<svg style="left:433px;top:78px;" width="16" height="22" viewBox="0 0 16 22"><g transform="translate(0,4.500) scale(1,.8)" stroke="#111" fill="none" stroke-width="1.200"><path d="M8 9v-8M5.500 4l2.500-3 2.500 3" /></g><text x="8" y="19.8" font-size="8.5" text-anchor="middle" fill="#111" stroke="#111" stroke-width=".25" font-family="Liberation Sans,sans-serif">aF5</text></svg>
<svg style="left:455px;top:78px;" width="16" height="22" viewBox="0 0 16 22"><g transform="translate(0,4.500) scale(1,.8)" stroke="#111" fill="none" stroke-width="1.200"><path d="M8 0v8M5.500 5l2.500 3 2.500-3" /></g><text x="8" y="19.8" font-size="8.5" text-anchor="middle" fill="#111" stroke="#111" stroke-width=".25" font-family="Liberation Sans,sans-serif">caF5</text></svg>
<svg style="left:477px;top:78px;" width="16" height="22" viewBox="0 0 16 22"><g transform="translate(0,4.500) scale(1,.8)" stroke="#111" fill="none" stroke-width="1.200"><path d="M0 5.500h16M4 8l9-6" /></g><text x="8" y="19.8" font-size="8.5" text-anchor="middle" fill="#111" stroke="#111" stroke-width=".25" font-family="Liberation Sans,sans-serif">caFI0</text></svg>
<svg style="left:499px;top:78px;" width="16" height="22" viewBox="0 0 16 22"><g transform="translate(0,4.500) scale(1,.8)" stroke="#111" fill="none" stroke-width="1.200"><path d="M2 0v7h13" /></g><text x="8" y="19.8" font-size="8.5" text-anchor="middle" fill="#111" stroke="#111" stroke-width=".25" font-family="Liberation Sans,sans-serif">F10</text></svg>
<svg style="left:521px;top:78px;" width="16" height="22" viewBox="0 0 16 22"><g transform="translate(0,4.500) scale(1,.8)" stroke="#111" fill="none" stroke-width="1.200"><path d="M1 1h3M2.500 1v6M12 1h3M1 7h14" /></g><path d="M4.500 3l7 8M11.500 3l-7 8" stroke="#e81010" stroke-width="1.500"/><text x="8" y="19.8" font-size="8.5" text-anchor="middle" fill="#111" stroke="#111" stroke-width=".25" font-family="Liberation Sans,sans-serif">aF9</text></svg>
<div class="a sep" style="left:542px;top:81px;width:1px;height:18px;"></div>
<svg style="left:549px;top:79px;" width="16" height="22" viewBox="0 0 16 22"><rect x="2.500" y="4.500" width="12" height="12" fill="#fff" stroke="#222" stroke-width="1.300"/><path d="M0 8h2.500M0 13h2.500M14.500 8h2.500M14.500 13h2.500" stroke="#222"/><text x="8.500" y="14" font-size="9" font-weight="bold" text-anchor="middle" fill="#1020e0" font-family="Liberation Sans,sans-serif">ST</text></svg>
<div class="a sep" style="left:570px;top:81px;width:1px;height:18px;"></div>
<svg style="left:577px;top:79px;" width="16" height="22" viewBox="0 0 16 22"><path d="M1 6.500h5M6 3v6M10 3v6M10 6.500h5" stroke="#222" stroke-width="1.200" fill="none" transform="translate(0,-1)"/><ellipse cx="6.0" cy="13.0" rx="5.0" ry="3.0" fill="#fff" stroke="#666"/><path d="M3 15.5l-1 2.500 3-2" fill="#fff" stroke="#666" stroke-width=".8"/><g transform="translate(8,9)"><path d="M0 7l1-3 5-5 2.500 2.500-5 5z" fill="#58c018" stroke="#2c7c08" stroke-width=".7"/><path d="M0 7l1-3 2 2z" fill="#222"/></g></svg>
<svg style="left:599px;top:79px;" width="16" height="22" viewBox="0 0 16 22"><rect x="0" y="4" width="3" height="3" fill="#fff" stroke="#222" stroke-width=".8"/><ellipse cx="8.0" cy="5.5" rx="5.0" ry="2.5" fill="#fff" stroke="#666"/><path d="M5 7.5l-1 2.500 3-2" fill="#fff" stroke="#666" stroke-width=".8"/><g transform="translate(9,3)"><path d="M0 7l1-3 5-5 2.500 2.500-5 5z" fill="#58c018" stroke="#2c7c08" stroke-width=".7"/><path d="M0 7l1-3 2 2z" fill="#222"/></g><path d="M0 15.500h4M4 13v5M7 13v5M7 15.500h2M14 15.500h2" stroke="#222" fill="none"/><ellipse cx="11.500" cy="15.500" rx="2.500" ry="2.500" fill="none" stroke="#222"/></svg>
<svg style="left:621px;top:79px;" width="16" height="22" viewBox="0 0 16 22"><ellipse cx="6.5" cy="6.0" rx="5.5" ry="3.0" fill="#fff" stroke="#666"/><path d="M3 8.5l-1 2.500 3-2" fill="#fff" stroke="#666" stroke-width=".8"/><g transform="translate(9,3)"><path d="M0 7l1-3 5-5 2.500 2.500-5 5z" fill="#58c018" stroke="#2c7c08" stroke-width=".7"/><path d="M0 7l1-3 2 2z" fill="#222"/></g><path d="M0 15.500h3M13 15.500h3M6 12.500c-2 2-2 4 0 6M10 12.500c2 2 2 4 0 6" stroke="#222" fill="none" stroke-width="1.200"/></svg>
<div class="a sep" style="left:642px;top:81px;width:1px;height:18px;"></div>
<svg style="left:649px;top:79px;" width="16" height="22" viewBox="0 0 16 22"><rect x="0" y="4" width="3" height="3" fill="none" stroke="#a9a9c6"/><ellipse cx="9" cy="5.500" rx="5" ry="3" fill="#eee" stroke="#a9a9c6"/><path d="M0 15.500h3M3 13v5M6 13v5" stroke="#a9a9c6"/><rect x="8" y="10" width="8" height="9" fill="#e8e8f0" stroke="#a9a9c6"/><path d="M8 13h8M8 16h8M12 10v9" stroke="#a9a9c6"/></svg>
<div class="a sep" style="left:670px;top:81px;width:1px;height:18px;"></div>
<svg style="left:677px;top:79px;" width="16" height="22" viewBox="0 0 16 22"><rect x="0" y="4" width="3" height="3" fill="#fff" stroke="#222" stroke-width=".8"/><ellipse cx="9.0" cy="5.0" rx="6.0" ry="3.0" fill="#fff" stroke="#666"/><path d="M5 7.5l-1 2.500 3-2" fill="#fff" stroke="#666" stroke-width=".8"/><path d="M0 15.500h3M3.500 13v5M6.500 13v5" stroke="#222"/><rect x="8" y="11" width="8" height="8" fill="#fff" stroke="#2040c0"/><rect x="8" y="11" width="8" height="2.500" fill="#2040c0"/><path d="M8 15.500h8M8 17.500h8" stroke="#2040c0"/></svg>
<div class="a sep" style="left:698px;top:81px;width:1px;height:18px;"></div>
<svg style="left:705px;top:79px;" width="16" height="22" viewBox="0 0 16 22"><path d="M1.500 3.500h10v14h-10z" fill="#e8e8f0" stroke="#a9a9c6"/><path d="M3 6h7M3 8.500h7M3 11h7M3 13.500h5" stroke="#a9a9c6"/><path d="M11 9h3v9h-7" stroke="#a9a9c6" fill="none"/></svg>
<svg style="left:727px;top:79px;" width="16" height="22" viewBox="0 0 16 22"><path d="M0 11l4-4v8z" fill="#a9a9c6"/><path d="M5.500 3.500h8v10h-8z" fill="#e8e8f0" stroke="#a9a9c6"/><circle cx="10" cy="11" r="3.500" fill="#f2f2f8" stroke="#a9a9c6" stroke-width="1.300"/><path d="M12.500 13.500l3 4" stroke="#a9a9c6" stroke-width="1.600"/></svg>
<svg style="left:749px;top:79px;" width="16" height="22" viewBox="0 0 16 22"><path d="M0 7l4 4-4 4z" fill="#a9a9c6"/><path d="M5.500 3.500h8v10h-8z" fill="#e8e8f0" stroke="#a9a9c6"/><circle cx="10" cy="11" r="3.500" fill="#f2f2f8" stroke="#a9a9c6" stroke-width="1.300"/><path d="M12.500 13.500l3 4" stroke="#a9a9c6" stroke-width="1.600"/></svg>
<div class="a sep" style="left:770px;top:81px;width:1px;height:18px;"></div>
<svg style="left:777px;top:79px;" width="16" height="22" viewBox="0 0 16 22"><g stroke="#1020e0" fill="none" stroke-width="1.200"><path d="M0 5.500h3M3 3v5M5 3v5M5 5.500h3M8 5.500h2M12 5.500h4M0 11.500h3M3 9v5M5 9v5M5 11.500h5M12 11.500h4M7 11.500v5h3M12 16.500h4" /><path d="M10 3.500l2 2-2 2M10 9.500l2 2-2 2M10 14.500l2 2-2 2" stroke-width="1"/></g></svg>
<div class="a " style="left:796px;top:79px;width:22px;height:22px;background:#fbc46c;border:1px solid #c8761c"></div>
<svg style="left:799px;top:79px;" width="16" height="22" viewBox="0 0 16 22"><g stroke="#1020e0" fill="none" stroke-width="1.200"><path d="M0 6.500h3M3 4v5M5 4v5M5 6.500h3M12 6.500h4M0 12.500h3M3 10v5M5 10v5M5 12.500h5M12 12.500h4M7 12.500v5h3M12 17.500h4"/><path d="M10 10.500l2 2-2 2M10 15.500l2 2-2 2" stroke-width="1"/></g><path d="M6 9l6-6 3 3-6 6z" fill="#e81010" stroke="#900" stroke-width=".6"/><path d="M6 9l-1 4 4-1z" fill="#ffe070" stroke="#333" stroke-width=".5"/></svg>
<svg style="left:821px;top:79px;" width="16" height="22" viewBox="0 0 16 22"><circle cx="9" cy="9" r="5.500" fill="#fff" stroke="#1020e0" stroke-width="1.300"/><path d="M13 13l4 5" stroke="#1020e0" stroke-width="1.500"/><path d="M7 5.500h5v7h-5z" fill="#ddd" stroke="#555" stroke-width=".8"/><path d="M8 7.500h3M8 9.500h3" stroke="#555" stroke-width=".8"/><rect x="0" y="14" width="8" height="5" fill="#222"/><rect x="0" y="14" width="3" height="5" fill="#d01010"/><path d="M4.5 15v3M6.5 15v3" stroke="#999"/></svg>
<svg style="left:843px;top:79px;" width="16" height="22" viewBox="0 0 16 22"><circle cx="9" cy="10" r="5.500" fill="#fff" stroke="#1020e0" stroke-width="1.300"/><path d="M13 14l4 4" stroke="#1020e0" stroke-width="1.500"/><path d="M6 12h5M6 10h4" stroke="#555" stroke-width=".8"/><path d="M8 10l6-7 3 2.500-6 7z" fill="#e81010" stroke="#900" stroke-width=".5"/><path d="M8 10l-.5 3 3-1z" fill="#ffe070"/><rect x="0" y="14" width="8" height="5" fill="#222"/><rect x="0" y="14" width="3" height="5" fill="#d01010"/><path d="M4.5 15v3M6.5 15v3" stroke="#999"/></svg>
<svg style="left:865px;top:79px;" width="16" height="22" viewBox="0 0 16 22"><rect x="1" y="3" width="14" height="7" fill="#a9a9c6"/><text x="8" y="9.500" font-size="7" font-weight="bold" fill="#eee" text-anchor="middle" font-family="Liberation Sans,sans-serif">Dev</text><circle cx="9" cy="13" r="4" fill="#eeeef6" stroke="#a9a9c6" stroke-width="1.300"/><path d="M12 16l3.500 3.500" stroke="#a9a9c6" stroke-width="1.600"/></svg>
<div class="a tb" style="left:920px;top:78px;width:435px;height:25px;"></div><div class="a tbcap" style="left:1355px;top:78px;width:11px;height:25px;"></div><svg style="left:1357px;top:93px;" width="8" height="8" viewBox="0 0 8 8"><path d="M1 2.500h6l-3 3.500z" fill="#fff" transform="translate(.7,.9)"/><path d="M0 .5h7" stroke="#000" stroke-width="1.200"/><path d="M0 2.500h7l-3.500 3.500z" fill="#000"/></svg><div class="a grip" style="left:923.5px;top:83px;width:3px;height:14px;"></div>
<svg style="left:1357px;top:82px;" width="8" height="6" viewBox="0 0 8 6"><path d="M0 0l2.500 2.500-2.500 2.500zM4 0l2.500 2.500-2.500 2.500z" fill="#000"/></svg>
<div class="a " style="left:927px;top:79px;width:22px;height:22px;background:#fbc46c;border:1px solid #c8761c"></div>
<svg style="left:930px;top:80px;" width="16" height="22" viewBox="0 0 16 22"><path d="M3.500 8v9.500h6M3.500 12.500h6" stroke="#666" fill="none"/><path d="M1 3h5l1 1h3v4.500h-9z" fill="#f6b820" stroke="#a87000" stroke-width=".8"/><path d="M8.500 9.500h3l1 1h3v4h-7z" fill="#f6b820" stroke="#a87000" stroke-width=".8" transform="translate(0,-1)"/><path d="M8.500 14.500h3l1 1h3v4h-7z" fill="#f6b820" stroke="#a87000" stroke-width=".8"/></svg>
<div class="a sep" style="left:951px;top:81px;width:1px;height:18px;"></div>
<svg style="left:958px;top:80px;" width="16" height="22" viewBox="0 0 16 22"><rect x="3" y="5" width="10" height="12" rx="1.500" fill="#9a9a9a" stroke="#111" stroke-width="1.600"/><path d="M0 8h3M0 11h3M0 14h3M13 8h3M13 11h3M13 14h3" stroke="#111" stroke-width="1.800"/></svg>
<div class="a sep" style="left:979px;top:81px;width:1px;height:18px;"></div>
<svg style="left:986px;top:80px;" width="16" height="22" viewBox="0 0 16 22"><rect x=".5" y="4.500" width="15" height="13" fill="#fff" stroke="#334"/><rect x="1" y="5" width="14" height="3" fill="#2858d8"/><path d="M2.500 10.500h11M2.500 12.500h11M2.500 14.500h11" stroke="#4878e8"/></svg>
<div class="a sep" style="left:1007px;top:81px;width:1px;height:18px;"></div>
<svg style="left:1014px;top:80px;" width="16" height="22" viewBox="0 0 16 22"><rect x="0" y="3" width="16" height="8" fill="#1e7be8"/><text x="8.0" y="10" font-size="8" text-anchor="middle" fill="#fff" font-weight="bold" font-family="Liberation Sans,sans-serif">Dev</text><rect x="0" y="12" width="7" height="7" fill="#1e7be8"/><g transform="translate(6.5,9.5) scale(.92)"><path d="M0 9v-6l1-2.500h2l1 2.500v6zM5.500 9v-6l1-2.500h2l1 2.500v6zM3 3h4v3h-4z" fill="#111"/></g></svg>
<svg style="left:1036px;top:80px;" width="16" height="22" viewBox="0 0 16 22"><rect x="0" y="3" width="16" height="8" fill="#1e7be8"/><text x="8.0" y="10" font-size="8" text-anchor="middle" fill="#fff" font-weight="bold" font-family="Liberation Sans,sans-serif">Dev</text><rect x="5.500" y="12.500" width="10" height="6" fill="#fff" stroke="#334"/><path d="M5.500 15.500h10M9 12.500v6M12.500 12.500v6" stroke="#334"/></svg>
<svg style="left:1058px;top:80px;" width="16" height="22" viewBox="0 0 16 22"><rect x="0" y="3" width="16" height="8" fill="#1e7be8"/><text x="8.0" y="10" font-size="8" text-anchor="middle" fill="#fff" font-weight="bold" font-family="Liberation Sans,sans-serif">Dev</text><path d="M8 11v3M3.500 14v-1.500h9.500v1.500" stroke="#222" fill="none"/><rect x=".5" y="14.500" width="6" height="4.500" fill="#666" stroke="#222"/><rect x="9.500" y="14.500" width="6" height="4.500" fill="#666" stroke="#222"/></svg>
<div class="a sep" style="left:1079px;top:81px;width:1px;height:18px;"></div>
<svg style="left:1086px;top:80px;" width="24" height="22" viewBox="0 0 24 22"><rect x="0" y="3" width="16" height="8" fill="#1e7be8"/><text x="8.0" y="10" font-size="8" text-anchor="middle" fill="#fff" font-weight="bold" font-family="Liberation Sans,sans-serif">Dev</text><path d="M1.500 15.500c3-4 10-4 13 0c-3 4-10 4-13 0z" fill="#fff" stroke="#222"/><circle cx="8" cy="15.500" r="2.200" fill="#7a1a00"/><path d="M18 10h5l-2.500 3z" fill="#111"/></svg>
<svg style="left:1116px;top:80px;" width="24" height="22" viewBox="0 0 24 22"><path d="M4 3v6M1 5h6M1.500 3.500c2-1.500 3.500-1.500 5 0M1.500 6.500c2 1.500 3.500 1.500 5 0" stroke="#333" fill="none"/><rect x="2" y="9" width="4.500" height="10" fill="#444"/><circle cx="11" cy="13" r="3.200" fill="#fff" stroke="#222" stroke-width="1.300"/><path d="M13.3 15.3l3.200 3.200" stroke="#222" stroke-width="2"/><path d="M18 10h5l-2.500 3z" fill="#111"/></svg>
<div class="a sep" style="left:1143px;top:81px;width:1px;height:18px;"></div>
<svg style="left:1150px;top:80px;" width="16" height="22" viewBox="0 0 16 22"><path d="M8 3c4 0 7 2.500 7 6s-3 6-6 6l-2 3v-3c-3-.5-6-2.500-6-6s3-6 7-6z" fill="#f0f0f6" stroke="#a9a9c6"/><text x="8" y="13" font-size="10" font-weight="bold" fill="#a9a9c6" text-anchor="middle" font-family="Liberation Sans,sans-serif">?</text></svg>
<div class="a sep" style="left:1171px;top:81px;width:1px;height:18px;"></div>
<svg style="left:1178px;top:80px;" width="16" height="22" viewBox="0 0 16 22"><path d="M1 19v-9l2-5h3l1.500 5v9zM9 19v-9l1.500-5h3l2 5v9zM6 9h4v5h-4z" fill="#1a1a1a"/><path d="M2.500 12v6M10.500 12v6" stroke="#888"/></svg>
<!-- tabs.tabs -->
<div class="a " style="left:186px;top:103px;width:1180px;height:26px;background:linear-gradient(#fdfdff,#f0f0f8);"></div>
<div class="a " style="left:186px;top:103px;width:4px;height:605px;background:linear-gradient(90deg,#c9c9dc,#e6e6f0 50%,#d0d0e2);"></div>
<svg style="left:0px;top:0px;" width="1366" height="130" viewBox="0 0 1366 130"><defs><linearGradient id="tg" x1="0" y1="0" x2="0" y2="1"><stop offset="0" stop-color="#fff"/><stop offset=".4" stop-color="#f4f4fa"/><stop offset="1" stop-color="#dcdcec"/></linearGradient></defs><path d="M181 128.5V112L185.5 107.5Q186.5 106.5 189 106.5H261.5Q264.5 106.5 264.5 109.5V128.5ZM264.5 128.5V112L269.0 107.5Q270.0 106.5 272.5 106.5H431.5Q434.5 106.5 434.5 109.5V128.5ZM434.5 128.5V112L439.0 107.5Q440.0 106.5 442.5 106.5H657Q660 106.5 660 109.5V128.5ZM874.5 128.5V112L879.0 107.5Q880.0 106.5 882.5 106.5H1091.5Q1094.5 106.5 1094.5 109.5V128.5ZM1094.5 128.5V112L1099.0 107.5Q1100.0 106.5 1102.5 106.5H1310.5Q1313.5 106.5 1313.5 109.5V128.5Z" fill="url(#tg)" transform="translate(0,-106) scale(1,1) translate(0,106)"/><path d="M181 128.5V112L185.5 107.5Q186.5 106.5 189 106.5H261.5Q264.5 106.5 264.5 109.5V128.5M264.5 128.5V112L269.0 107.5Q270.0 106.5 272.5 106.5H431.5Q434.5 106.5 434.5 109.5V128.5M434.5 128.5V112L439.0 107.5Q440.0 106.5 442.5 106.5H657Q660 106.5 660 109.5V128.5M874.5 128.5V112L879.0 107.5Q880.0 106.5 882.5 106.5H1091.5Q1094.5 106.5 1094.5 109.5V128.5M1094.5 128.5V112L1099.0 107.5Q1100.0 106.5 1102.5 106.5H1310.5Q1313.5 106.5 1313.5 109.5V128.5M181 128.5H1313.5" fill="none" stroke="#2458c0"/></svg>
<svg style="left:636px;top:105px;" width="240" height="24" viewBox="0 0 240 24"><defs><linearGradient id="og" x1="0" y1="0" x2="0" y2="1"><stop offset="0" stop-color="#fff3dc"/><stop offset=".45" stop-color="#fdd9a0"/><stop offset="1" stop-color="#f9b050"/></linearGradient></defs><path d="M0 24l8-2l14-18q2-3 6-3h207.5q3 0 3 3v20z" fill="url(#og)"/><path d="M0 23.500l8-2l14-17.500q2-3 6-3h207.5q3 0 3 3v20" fill="none" stroke="#2458c0" stroke-width="1"/></svg>
<div class="t tabt" style="left:181px;top:112px;font-size:12px;">AIN (<span style="letter-spacing:0">只读</span>) ...</div>
<div class="a " style="left:176px;top:104px;width:10px;height:26px;background:#e6e6f0;"></div>
<div class="a " style="left:186px;top:103px;width:4px;height:27px;background:linear-gradient(90deg,#c9c9dc,#e6e6f0 50%,#d0d0e2);"></div>
<svg style="left:273px;top:110px;" width="16" height="17" viewBox="0 0 16 17"><circle cx="7" cy="7" r="6.500" fill="#2a78d8"/><path d="M3 3c2-1 3 1 2 3s-3 1-3 3M8 1c2 1 4 2 3 4s-2 0-3 2 2 3 1 5" fill="#38b038" stroke="#38b038"/><path d="M5.500 6.500h8v10h-8z" fill="#fff" stroke="#889"/><path d="M7 9h4M7 11h4M7 13h3" stroke="#888" stroke-width=".8"/><path d="M9 13l5-6 2 1.500-5 6-2.500 1z" fill="#58c018" stroke="#2c7c08" stroke-width=".6"/></svg>
<div class="t tabt" style="left:292px;top:112px;font-size:12px;"><span style="letter-spacing:0">软元件注释</span> COMMENT</div>
<svg style="left:445px;top:111px;" width="12" height="15" viewBox="0 0 12 15"><path d="M.5 .5h7.500l3.500 3.500v10.500h-11z" fill="#fff" stroke="#8a94ac"/><path d="M8 .5v3.500h3.500" fill="#dde" stroke="#8a94ac"/><path d="M1.500 9h2.500M4.500 6v6M7.500 6v6M8 9h2.500" stroke="#e01010" stroke-width="1.500" fill="none"/></svg>
<div class="t tabt" style="left:462px;top:112px;font-size:12px;letter-spacing:.33px">[FB]<span style="letter-spacing:0">监视</span> <span style="letter-spacing:0">停止中</span> 1<span style="letter-spacing:0">盘镀铬</span>(MAIN...</div>
<svg style="left:665px;top:111px;" width="12" height="15" viewBox="0 0 12 15"><path d="M.5 .5h7.500l3.500 3.500v10.500h-11z" fill="#fff" stroke="#8a94ac"/><path d="M8 .5v3.500h3.500" fill="#dde" stroke="#8a94ac"/><path d="M1.500 9h2.500M4.500 6v6M7.500 6v6M8 9h2.500" stroke="#e01010" stroke-width="1.500" fill="none"/></svg>
<div class="t tabt" style="left:683px;top:112px;font-size:12px;font-weight:bold;letter-spacing:.3px">[FB]<span style="letter-spacing:0">写入</span> <span style="letter-spacing:0">平头螺丝</span>(MAIN....</div>
<div class="a " style="left:854px;top:109px;width:16px;height:16px;background:#fbf6ea;border:1px solid #c8c0a8"></div>
<svg style="left:854px;top:109px;" width="16" height="16" viewBox="0 0 16 16"><path d="M4.500 4.500l7 7M11.500 4.500l-7 7" stroke="#8a8270" stroke-width="2"/></svg>
<svg style="left:887px;top:111px;" width="12" height="15" viewBox="0 0 12 15"><path d="M.5 .5h7.500l3.500 3.500v10.500h-11z" fill="#fff" stroke="#8a94ac"/><path d="M8 .5v3.500h3.500" fill="#dde" stroke="#8a94ac"/><path d="M1.500 9h2.500M4.500 6v6M7.500 6v6M8 9h2.500" stroke="#e01010" stroke-width="1.500" fill="none"/></svg>
<div class="t tabt" style="left:902px;top:112px;font-size:12px;letter-spacing:.33px">[FB]<span style="letter-spacing:0">监视</span> <span style="letter-spacing:0">执行中</span> <span style="letter-spacing:0">手动模块</span>(MAI...</div>
<svg style="left:1107px;top:111px;" width="12" height="15" viewBox="0 0 12 15"><path d="M.5 .5h7.500l3.500 3.500v10.500h-11z" fill="#fff" stroke="#8a94ac"/><path d="M8 .5v3.500h3.500" fill="#dde" stroke="#8a94ac"/><path d="M1.500 9h2.500M4.500 6v6M7.500 6v6M8 9h2.500" stroke="#e01010" stroke-width="1.500" fill="none"/></svg>
<div class="t tabt" style="left:1122px;top:112px;font-size:12px;letter-spacing:.33px">[FB]<span style="letter-spacing:0">监视</span> <span style="letter-spacing:0">执行中</span> <span style="letter-spacing:0">组装工序</span>(MAI...</div>
<svg style="left:1318px;top:110px;" width="48" height="14" viewBox="0 0 48 14"><path d="M8 1v10l-5-5z" fill="#000"/><path d="M19.500 1.500v9l5-4.500z" fill="#fff" stroke="#000"/><path d="M33 3h10" stroke="#000" stroke-width="2"/><path d="M33 6h10l-5 5z" fill="#000"/></svg>
<!-- nav.nav -->
<div class="a " style="left:0px;top:103px;width:186px;height:27px;background:linear-gradient(#fafafd 0,#ececf4 35%,#d0d0e2 70%,#b0b0cc 100%);border-radius:0 4px 0 0"></div>
<div class="a grip" style="left:6px;top:108px;width:3px;height:19px;"></div>
<div class="t " style="left:14px;top:111px;font-size:12px;">导航</div>
<svg style="left:155px;top:110px;" width="26" height="12" viewBox="0 0 26 12"><path d="M1.5 .5h4v5h-4zM4.500 .5v5M0 6h7M3.500 6v5" fill="none" stroke="#000" stroke-width="1.200"/><path d="M15 2l8 8M23 2l-8 8" stroke="#000" stroke-width="1.600"/></svg>
<div class="a " style="left:0px;top:130px;width:186px;height:50px;background:#a4a4c6;"></div>
<div class="a " style="left:0px;top:130px;width:186px;height:25px;background:linear-gradient(#a8a8c6 0,#9292b6 50%,#7878a2 100%);border-top:1px solid #8484aa;border-left:1px solid #8a8aae"></div>
<div class="t " style="left:5px;top:139px;font-size:10.5px;color:#fff;font-weight:bold">工程</div>
<div class="a " style="left:4px;top:155px;width:182px;height:25px;background:linear-gradient(#fbfbfe 0,#eeeef6 30%,#d4d4e6 65%,#a9a9c8 100%);border-radius:3px"></div>
<svg style="left:6px;top:159px;" width="150" height="18" viewBox="0 0 150 18"><path d="M1.500 4.500h10v12h-10z" fill="#fff" stroke="#444"/><path d="M12.500 1v7.500M8.700 4.700h7.600" stroke="#f07808" stroke-width="2.600"/><g transform="translate(22,3)" opacity=".55"><path d="M.5 .5h6v8h-6z" fill="#eee" stroke="#99a"/><path d="M4.500 4.500h7v9h-7z" fill="#eee" stroke="#99a"/><path d="M6 8h4M6 10h4" stroke="#99a"/></g><g transform="translate(45,2)" opacity=".55"><path d="M.5 1.500h9v11h-9z" fill="#ddd" stroke="#99a"/><rect x="2.500" y=".5" width="5" height="2.500" fill="#ccc" stroke="#99a"/><path d="M5.500 6.500h7v8h-7z" fill="#eee" stroke="#99a"/></g><g transform="translate(67,0)"><path d="M.5 .5h5l2 2v6h-7z" fill="#fff" stroke="#555"/><path d="M1.500 3h4M1.500 5h4" stroke="#888" stroke-width=".8"/><circle cx="9" cy="11" r="4.500" fill="#1a66e0"/><path d="M9 8v1.200M9 10.200v3.500" stroke="#fff" stroke-width="1.600"/></g><g transform="translate(90,2)"><path d="M.5 .5h7l3 3v10h-10z" fill="#fff" stroke="#555"/><path d="M2.500 8a3 3 0 015-2l1-1v3h-3l1-1a2 2 0 00-3 1zM8.500 9a3 3 0 01-5 2l-1 1v-3h3l-1 1a2 2 0 003-1z" fill="#18a030"/></g><path d="M109.500 1v16" stroke="#8888aa"/><path d="M110.500 1v16" stroke="#f4f4fa"/><g transform="translate(116,1)"><path d="M3 2l8-2v9h-8z" fill="#505050"/><path d="M4 3.500l6-1.500v6h-6z" fill="#9a9a9a"/><path d="M3 9h8l-2 2-9-1z" fill="#b0b0b4"/><rect x="6" y="5" width="3.500" height="11" fill="#e03024"/><rect x="9.500" y="4.500" width="6" height="11.500" fill="#3c3c3c"/><path d="M12 6.500h2M12 9h2M12 11.500h2" stroke="#ccc" stroke-width=".9"/><path d="M18 7h5l-2.500 3z" fill="#000"/></g></svg>
<div class="a " style="left:0px;top:180px;width:186px;height:375px;background:#fff;border-left:1px solid #9c9cb8"></div>
<div class="a vdot" style="left:9px;top:180px;width:0px;height:375px;"></div>
<div class="a vdot" style="left:28px;top:180px;width:0px;height:371px;"></div>
<div class="a vdot" style="left:47px;top:196px;width:0px;height:274px;"></div>
<div class="a hdot" style="left:52px;top:191px;width:6px;height:0px;"></div>
<svg style="left:43px;top:187px;" width="9" height="9" viewBox="0 0 9 9"><rect x=".5" y=".5" width="8" height="8" fill="#fff" stroke="#848484"/><path d="M2.500 4.500h4" stroke="#000"/><path d="M4.500 2.500v4" stroke="#000"/></svg>
<svg style="left:58px;top:184px;" width="17" height="15" viewBox="0 0 17 15"><path d="M.5 12.5v-9q0-2 2-2h2.500q1.500 0 2 1.500h7.500q1 0 1 1v8.500q0 1-1 1h-13q-1 0-1-1z" fill="#fdf2b8" stroke="#b8860b" stroke-width="1"/><rect x="3.500" y="3.500" width="11" height="7" fill="#2c9c3c" stroke="#1a6e2c" stroke-width=".6"/><rect x="4" y="4" width="4" height="5" fill="#9ee09e" opacity=".8"/><path d="M1 10.500h11.500v-5h3v7.500h-14.500z" fill="#f4c842" stroke="#b8860b" stroke-width=".7"/></svg>
<div class="t " style="left:79px;top:185px;font-size:12px;">2盘下镀铬</div>
<div class="a hdot" style="left:52px;top:211px;width:6px;height:0px;"></div>
<svg style="left:43px;top:207px;" width="9" height="9" viewBox="0 0 9 9"><rect x=".5" y=".5" width="8" height="8" fill="#fff" stroke="#848484"/><path d="M2.500 4.500h4" stroke="#000"/></svg>
<svg style="left:58px;top:204px;" width="17" height="15" viewBox="0 0 17 15"><path d="M.5 12.5v-9q0-2 2-2h2.500q1.500 0 2 1.500h7.500q1 0 1 1v8.500q0 1-1 1h-13q-1 0-1-1z" fill="#fdf2b8" stroke="#b8860b" stroke-width="1"/><rect x="3.500" y="3.500" width="11" height="7" fill="#2c9c3c" stroke="#1a6e2c" stroke-width=".6"/><rect x="4" y="4" width="4" height="5" fill="#9ee09e" opacity=".8"/><path d="M1 10.500h11.500v-5h3v7.500h-14.500z" fill="#f4c842" stroke="#b8860b" stroke-width=".7"/></svg>
<div class="t " style="left:79px;top:205px;font-size:12px;">卸料工序</div>
<div class="a vdot" style="left:66px;top:221px;width:0px;height:10px;"></div>
<div class="a hdot" style="left:66px;top:231px;width:12px;height:0px;"></div>
<svg style="left:79px;top:224px;" width="12" height="15" viewBox="0 0 12 15"><path d="M.5 .5h7.500l3.500 3.500v10.500h-11z" fill="#fff" stroke="#8a94ac"/><path d="M8 .5v3.500h3.500" fill="#dde" stroke="#8a94ac"/><path d="M1.500 9h2.500M4.500 6v6M7.500 6v6M8 9h2.500" stroke="#e01010" stroke-width="1.500" fill="none"/></svg>
<div class="t " style="left:98px;top:225px;font-size:12px;">程序本体</div>
<div class="a vdot" style="left:66px;top:231px;width:0px;height:20px;"></div>
<div class="a hdot" style="left:66px;top:251px;width:12px;height:0px;"></div>
<svg style="left:77px;top:243px;" width="17" height="16" viewBox="0 0 17 16"><path d="M2 2c3-2 7-2 9 0v8h-9z" fill="#a8d4f8" stroke="#6aa0d8"/><circle cx="6" cy="5" r="4" fill="#c8e4fc" opacity=".8"/><rect x="5.500" y="6.500" width="10" height="9" fill="#fff" stroke="#2030c8"/><path d="M5.500 9.500h10M5.500 12.500h10M9 6.500v9" stroke="#2030c8"/></svg>
<div class="t " style="left:98px;top:245px;font-size:12px;">局部标签</div>
<div class="a hdot" style="left:52px;top:271px;width:6px;height:0px;"></div>
<svg style="left:43px;top:267px;" width="9" height="9" viewBox="0 0 9 9"><rect x=".5" y=".5" width="8" height="8" fill="#fff" stroke="#848484"/><path d="M2.500 4.500h4" stroke="#000"/><path d="M4.500 2.500v4" stroke="#000"/></svg>
<svg style="left:58px;top:264px;" width="17" height="15" viewBox="0 0 17 15"><path d="M.5 12.5v-9q0-2 2-2h2.500q1.500 0 2 1.500h7.500q1 0 1 1v8.500q0 1-1 1h-13q-1 0-1-1z" fill="#fdf2b8" stroke="#b8860b" stroke-width="1"/><rect x="3.500" y="3.500" width="11" height="7" fill="#2c9c3c" stroke="#1a6e2c" stroke-width=".6"/><rect x="4" y="4" width="4" height="5" fill="#9ee09e" opacity=".8"/><path d="M1 10.500h11.500v-5h3v7.500h-14.500z" fill="#f4c842" stroke="#b8860b" stroke-width=".7"/></svg>
<div class="t " style="left:79px;top:265px;font-size:12px;">圆头螺丝</div>
<div class="a hdot" style="left:52px;top:291px;width:6px;height:0px;"></div>
<svg style="left:43px;top:287px;" width="9" height="9" viewBox="0 0 9 9"><rect x=".5" y=".5" width="8" height="8" fill="#fff" stroke="#848484"/><path d="M2.500 4.500h4" stroke="#000"/></svg>
<svg style="left:58px;top:284px;" width="17" height="15" viewBox="0 0 17 15"><path d="M.5 12.5v-9q0-2 2-2h2.500q1.500 0 2 1.500h7.500q1 0 1 1v8.500q0 1-1 1h-13q-1 0-1-1z" fill="#fdf2b8" stroke="#b8860b" stroke-width="1"/><rect x="3.500" y="3.500" width="11" height="7" fill="#2c9c3c" stroke="#1a6e2c" stroke-width=".6"/><rect x="4" y="4" width="4" height="5" fill="#9ee09e" opacity=".8"/><path d="M1 10.500h11.500v-5h3v7.500h-14.500z" fill="#f4c842" stroke="#b8860b" stroke-width=".7"/></svg>
<div class="t " style="left:79px;top:285px;font-size:12px;">奶盖镀铬</div>
<div class="a vdot" style="left:66px;top:301px;width:0px;height:10px;"></div>
<div class="a hdot" style="left:66px;top:311px;width:12px;height:0px;"></div>
<svg style="left:79px;top:304px;" width="12" height="15" viewBox="0 0 12 15"><path d="M.5 .5h7.500l3.500 3.500v10.500h-11z" fill="#fff" stroke="#8a94ac"/><path d="M8 .5v3.500h3.500" fill="#dde" stroke="#8a94ac"/><path d="M1.500 9h2.500M4.500 6v6M7.500 6v6M8 9h2.500" stroke="#e01010" stroke-width="1.500" fill="none"/></svg>
<div class="t " style="left:98px;top:305px;font-size:12px;">程序本体</div>
<div class="a vdot" style="left:66px;top:311px;width:0px;height:20px;"></div>
<div class="a hdot" style="left:66px;top:331px;width:12px;height:0px;"></div>
<svg style="left:77px;top:323px;" width="17" height="16" viewBox="0 0 17 16"><path d="M2 2c3-2 7-2 9 0v8h-9z" fill="#a8d4f8" stroke="#6aa0d8"/><circle cx="6" cy="5" r="4" fill="#c8e4fc" opacity=".8"/><rect x="5.500" y="6.500" width="10" height="9" fill="#fff" stroke="#2030c8"/><path d="M5.500 9.500h10M5.500 12.500h10M9 6.500v9" stroke="#2030c8"/></svg>
<div class="t " style="left:98px;top:325px;font-size:12px;">局部标签</div>
<div class="a hdot" style="left:52px;top:351px;width:6px;height:0px;"></div>
<svg style="left:43px;top:347px;" width="9" height="9" viewBox="0 0 9 9"><rect x=".5" y=".5" width="8" height="8" fill="#fff" stroke="#848484"/><path d="M2.500 4.500h4" stroke="#000"/></svg>
<svg style="left:58px;top:344px;" width="17" height="15" viewBox="0 0 17 15"><path d="M.5 12.5v-9q0-2 2-2h2.500q1.500 0 2 1.500h7.500q1 0 1 1v8.500q0 1-1 1h-13q-1 0-1-1z" fill="#fdf2b8" stroke="#b8860b" stroke-width="1"/><rect x="3.500" y="3.500" width="11" height="7" fill="#2c9c3c" stroke="#1a6e2c" stroke-width=".6"/><rect x="4" y="4" width="4" height="5" fill="#9ee09e" opacity=".8"/><path d="M1 10.500h11.500v-5h3v7.500h-14.500z" fill="#f4c842" stroke="#b8860b" stroke-width=".7"/></svg>
<div class="t " style="left:79px;top:345px;font-size:12px;">平头螺丝</div>
<div class="a vdot" style="left:66px;top:361px;width:0px;height:10px;"></div>
<div class="a hdot" style="left:66px;top:371px;width:12px;height:0px;"></div>
<svg style="left:79px;top:364px;" width="12" height="15" viewBox="0 0 12 15"><path d="M.5 .5h7.500l3.500 3.500v10.500h-11z" fill="#fff" stroke="#8a94ac"/><path d="M8 .5v3.500h3.500" fill="#dde" stroke="#8a94ac"/><path d="M1.500 9h2.500M4.500 6v6M7.500 6v6M8 9h2.500" stroke="#e01010" stroke-width="1.500" fill="none"/></svg>
<div class="a " style="left:96px;top:361px;width:52px;height:20px;background:#eeeeee;"></div>
<div class="t " style="left:98px;top:365px;font-size:12px;">程序本体</div>
<div class="a vdot" style="left:66px;top:371px;width:0px;height:20px;"></div>
<div class="a hdot" style="left:66px;top:391px;width:12px;height:0px;"></div>
<svg style="left:77px;top:383px;" width="17" height="16" viewBox="0 0 17 16"><path d="M2 2c3-2 7-2 9 0v8h-9z" fill="#a8d4f8" stroke="#6aa0d8"/><circle cx="6" cy="5" r="4" fill="#c8e4fc" opacity=".8"/><rect x="5.500" y="6.500" width="10" height="9" fill="#fff" stroke="#2030c8"/><path d="M5.500 9.500h10M5.500 12.500h10M9 6.500v9" stroke="#2030c8"/></svg>
<div class="t " style="left:98px;top:385px;font-size:12px;">局部标签</div>
<div class="a hdot" style="left:52px;top:411px;width:6px;height:0px;"></div>
<svg style="left:43px;top:407px;" width="9" height="9" viewBox="0 0 9 9"><rect x=".5" y=".5" width="8" height="8" fill="#fff" stroke="#848484"/><path d="M2.500 4.500h4" stroke="#000"/></svg>
<svg style="left:58px;top:404px;" width="17" height="15" viewBox="0 0 17 15"><path d="M.5 12.5v-9q0-2 2-2h2.500q1.500 0 2 1.500h7.500q1 0 1 1v8.500q0 1-1 1h-13q-1 0-1-1z" fill="#fdf2b8" stroke="#b8860b" stroke-width="1"/><rect x="3.500" y="3.500" width="11" height="7" fill="#2c9c3c" stroke="#1a6e2c" stroke-width=".6"/><rect x="4" y="4" width="4" height="5" fill="#9ee09e" opacity=".8"/><path d="M1 10.500h11.500v-5h3v7.500h-14.500z" fill="#f4c842" stroke="#b8860b" stroke-width=".7"/></svg>
<div class="t " style="left:79px;top:405px;font-size:12px;">手动模块</div>
<div class="a vdot" style="left:66px;top:421px;width:0px;height:10px;"></div>
<div class="a hdot" style="left:66px;top:431px;width:12px;height:0px;"></div>
<svg style="left:79px;top:424px;" width="12" height="15" viewBox="0 0 12 15"><path d="M.5 .5h7.500l3.500 3.500v10.500h-11z" fill="#fff" stroke="#8a94ac"/><path d="M8 .5v3.500h3.500" fill="#dde" stroke="#8a94ac"/><path d="M1.500 9h2.500M4.500 6v6M7.500 6v6M8 9h2.500" stroke="#e01010" stroke-width="1.500" fill="none"/></svg>
<div class="t " style="left:98px;top:425px;font-size:12px;">程序本体</div>
<div class="a vdot" style="left:66px;top:431px;width:0px;height:20px;"></div>
<div class="a hdot" style="left:66px;top:451px;width:12px;height:0px;"></div>
<svg style="left:77px;top:443px;" width="17" height="16" viewBox="0 0 17 16"><path d="M2 2c3-2 7-2 9 0v8h-9z" fill="#a8d4f8" stroke="#6aa0d8"/><circle cx="6" cy="5" r="4" fill="#c8e4fc" opacity=".8"/><rect x="5.500" y="6.500" width="10" height="9" fill="#fff" stroke="#2030c8"/><path d="M5.500 9.500h10M5.500 12.500h10M9 6.500v9" stroke="#2030c8"/></svg>
<div class="t " style="left:98px;top:445px;font-size:12px;">局部标签</div>
<div class="a hdot" style="left:52px;top:471px;width:6px;height:0px;"></div>
<svg style="left:43px;top:467px;" width="9" height="9" viewBox="0 0 9 9"><rect x=".5" y=".5" width="8" height="8" fill="#fff" stroke="#848484"/><path d="M2.500 4.500h4" stroke="#000"/></svg>
<svg style="left:58px;top:464px;" width="17" height="15" viewBox="0 0 17 15"><path d="M.5 12.5v-9q0-2 2-2h2.500q1.500 0 2 1.500h7.500q1 0 1 1v8.500q0 1-1 1h-13q-1 0-1-1z" fill="#fdf2b8" stroke="#b8860b" stroke-width="1"/><rect x="3.500" y="3.500" width="11" height="7" fill="#2c9c3c" stroke="#1a6e2c" stroke-width=".6"/><rect x="4" y="4" width="4" height="5" fill="#9ee09e" opacity=".8"/><path d="M1 10.500h11.500v-5h3v7.500h-14.500z" fill="#f4c842" stroke="#b8860b" stroke-width=".7"/></svg>
<div class="t " style="left:79px;top:465px;font-size:12px;">组装工序</div>
<div class="a vdot" style="left:66px;top:481px;width:0px;height:10px;"></div>
<div class="a hdot" style="left:66px;top:491px;width:12px;height:0px;"></div>
<svg style="left:79px;top:484px;" width="12" height="15" viewBox="0 0 12 15"><path d="M.5 .5h7.500l3.500 3.500v10.500h-11z" fill="#fff" stroke="#8a94ac"/><path d="M8 .5v3.500h3.500" fill="#dde" stroke="#8a94ac"/><path d="M1.500 9h2.500M4.500 6v6M7.500 6v6M8 9h2.500" stroke="#e01010" stroke-width="1.500" fill="none"/></svg>
<div class="t " style="left:98px;top:485px;font-size:12px;">程序本体</div>
<div class="a vdot" style="left:66px;top:491px;width:0px;height:20px;"></div>
<div class="a hdot" style="left:66px;top:511px;width:12px;height:0px;"></div>
<svg style="left:77px;top:503px;" width="17" height="16" viewBox="0 0 17 16"><path d="M2 2c3-2 7-2 9 0v8h-9z" fill="#a8d4f8" stroke="#6aa0d8"/><circle cx="6" cy="5" r="4" fill="#c8e4fc" opacity=".8"/><rect x="5.500" y="6.500" width="10" height="9" fill="#fff" stroke="#2030c8"/><path d="M5.500 9.500h10M5.500 12.500h10M9 6.500v9" stroke="#2030c8"/></svg>
<div class="t " style="left:98px;top:505px;font-size:12px;">局部标签</div>
<div class="a hdot" style="left:28px;top:531px;width:10px;height:0px;"></div>
<svg style="left:38px;top:523px;" width="17" height="16" viewBox="0 0 17 16"><rect x="1" y="1" width="15" height="14" rx="2" fill="#f7d860" stroke="#8a6a10"/><rect x="3" y="3" width="11" height="10" fill="#222"/><path d="M3 6.500h11M3 9.500h11M8 3v10" stroke="#f7d860"/><rect x="9" y="3" width="5" height="3" fill="#e03020"/><rect x="3" y="7" width="5" height="2.500" fill="#30b040"/></svg>
<div class="t " style="left:60px;top:525px;font-size:12px;">结构体</div>
<div class="a hdot" style="left:28px;top:551px;width:10px;height:0px;"></div>
<svg style="left:38px;top:544px;" width="17" height="16" viewBox="0 0 17 16"><path d="M3.500 2.500h8l3 3v10h-11z" fill="#fff" stroke="#777"/><path d="M6 .5h7l3 3v9" fill="none" stroke="#999"/><path d="M.5 9.500h12v6h-12z" fill="#f7e48a" stroke="#8a7420"/></svg>
<div class="t " style="left:60px;top:545px;font-size:12px;">局部软元件注释</div>
<div class="a " style="left:169px;top:180px;width:17px;height:375px;background:#f0f0f0;"></div>
<svg style="left:173px;top:186px;" width="9" height="6" viewBox="0 0 9 6"><path d="M0 5l4.500-4.500 4.500 4.500z" fill="#505050"/></svg>
<svg style="left:173px;top:543px;" width="9" height="6" viewBox="0 0 9 6"><path d="M0 0l4.500 4.500 4.500-4.500z" fill="#505050"/></svg>
<div class="a " style="left:170px;top:361px;width:15px;height:158px;background:linear-gradient(90deg,#f6f6f6 0,#e4e4e4 45%,#cfcfcf 50%,#dcdcdc 100%);border:1px solid #979797;border-radius:3px"></div>
<svg style="left:173px;top:435px;" width="9" height="8" viewBox="0 0 9 8"><path d="M0 .5h8M0 3.500h8M0 6.500h8" stroke="#555"/></svg>
<div class="a " style="left:0px;top:555px;width:186px;height:17px;background:#f0f0f0;"></div>
<div class="a " style="left:169px;top:555px;width:17px;height:17px;background:#e8e8ee;"></div>
<svg style="left:7px;top:559px;" width="6" height="9" viewBox="0 0 6 9"><path d="M5 0l-4.500 4.500 4.500 4.500z" fill="#505050"/></svg>
<svg style="left:157px;top:559px;" width="6" height="9" viewBox="0 0 6 9"><path d="M0 0l4.500 4.500-4.500 4.500z" fill="#505050"/></svg>
<div class="a " style="left:19px;top:556px;width:129px;height:15px;background:linear-gradient(#f6f6f6 0,#e4e4e4 45%,#cfcfcf 50%,#dcdcdc 100%);border:1px solid #979797;border-radius:3px"></div>
<svg style="left:79px;top:560px;" width="8" height="8" viewBox="0 0 8 8"><path d="M.5 0v8M3.500 0v8M6.500 0v8" stroke="#555"/></svg>
<div class="a " style="left:0px;top:572px;width:186px;height:7px;background:linear-gradient(#aeaecb,#8c8cb2);"></div>
<div class="a " style="left:75px;top:574px;width:35px;height:2px;background-image:linear-gradient(90deg,#2c2c5c 0,#2c2c5c 2px,transparent 2px);background-size:4px 2px"></div>
<div class="a " style="left:0px;top:579px;width:186px;height:31px;background:linear-gradient(#fbe090 0,#f9c860 40%,#f5ac38 60%,#ef9c2a 100%);border-top:1px solid #fde8b8;border-bottom:1px solid #b87820"></div>
<div class="a nbtn" style="top:610px"></div><div class="a nbtn" style="top:642px"></div><div class="a nbtn" style="top:674px;height:34px"></div>
<div class="t " style="left:35px;top:589px;font-size:12px;font-weight:bold">工程</div>
<div class="t " style="left:35px;top:621px;font-size:12px;font-weight:bold">用户库</div>
<div class="t " style="left:35px;top:653px;font-size:12px;font-weight:bold">连接目标</div>
<svg style="left:6px;top:582px;" width="26" height="26" viewBox="0 0 26 26"><path d="M5 3l13-3v16h-13z" fill="#484848"/><path d="M6.500 5l10-2.500v12h-10z" fill="#8c8c8c"/><path d="M5 16h13l-4 3-14-1z" fill="#b4b4b8" stroke="#777" stroke-width=".5"/><rect x="10" y="10" width="5" height="14" fill="#d82c1a"/><rect x="10" y="10" width="2" height="14" fill="#f06048"/><rect x="15" y="9" width="9" height="15" fill="#383838"/><path d="M19 12h1.500M19 14.500h1.500M19 17h1.500M21.500 12h1.500M21.500 14.500h1.500M21.500 17h1.500M21.500 19.500h1.500" stroke="#cfcfcf" stroke-width="1.200"/><rect x="16" y="10" width="2" height="5" fill="#3a9a4a"/></svg>
<svg style="left:6px;top:614px;" width="26" height="26" viewBox="0 0 26 26"><path d="M0 4c4-2 8-1 11 1c3-2 7-3 11-1v14c-4-2-8-1-11 1c-3-2-7-3-11-1z" fill="#f2e8d8" stroke="#6a5030"/><path d="M11 5v14" stroke="#6a5030"/><path d="M2 7.500h7M2 10h7M2 12.500h7M2 15h7M13 7.500h7M13 10h4" stroke="#b8a888" stroke-width=".7"/><path d="M15 8l2.500-1.500 2.500 6h4v9h-8.500v-7z" fill="#f2c428" stroke="#8a6a10" stroke-width=".7"/><rect x="15" y="21" width="9" height="3" fill="#48a848"/></svg>
<svg style="left:6px;top:646px;" width="26" height="26" viewBox="0 0 26 26"><path d="M2 7v13h13" fill="none" stroke="#18a028" stroke-width="1.600"/><path d="M5 4l13-2.500v12l-13 .5z" fill="#222"/><path d="M6.500 5.500l10.500-2v9.500l-10.500 .3z" fill="#34c8ff"/><path d="M3 15.500h14l-2 3h-13z" fill="#9a9a9a" stroke="#555" stroke-width=".5"/><rect x="14" y="7" width="10" height="18" fill="#303030" stroke="#111" stroke-width=".6"/><path d="M19.500 9.500h3M19.500 11.500h3M19.500 13.500h3M19.500 15.500h3" stroke="#8fcf8f" stroke-width=".9"/><path d="M15 18.500h8M15 21.500h8" stroke="#888" stroke-width="1.200"/></svg>
<svg style="left:171px;top:685px;" width="8" height="14" viewBox="0 0 8 14"><path d="M0 0l2.500 2.500-2.500 2.500M4 0l2.500 2.500-2.500 2.500" stroke="#000" fill="none" stroke-width="1.200"/><path d="M.5 9h6l-3 3z" fill="#000"/></svg>
<!-- ladder.ladder -->
<div class="a " style="left:190px;top:128px;width:1176px;height:580px;background:#fff;border:1px solid #2a5cc0;box-shadow:inset 0 0 0 1px #f6b860, inset 0 2px 0 0 #f6b860, inset 2px 3px 0 0 #a0a0a0, inset 3px 4px 0 0 #696969, inset -2px -2px 0 0 #e6e6e6"></div>
<div class="a " style="left:638px;top:128px;width:236px;height:1px;background:#f8b254;"></div>
<svg style="left:0;top:0" width="1366" height="706" viewBox="0 0 1366 706"><path d="M329.5 132L329.5 705M1337.5 132L1337.5 705M494.5 132L494.5 167M329.5 166.5L364 166.5M377 166.5L494.5 166.5M364.5 155L364.5 176M376.5 155L376.5 176M329.5 298.5L1158 298.5M1163 288.500H1158.500V308.500H1163M1329 288.500H1333.500V308.500H1329M1333.5 298.5L1337.5 298.5M329.5 430.5L364 430.5M377 430.5L447 430.5M460 430.5L1241 430.5M364.5 419.0L364.5 440.0M376.5 419.0L376.5 440.0M447.5 419.0L447.5 440.0M459.5 419.0L459.5 440.0M442 440.0L464 420.0M1246 420.0Q1240.5 425.0 1240.5 430.5Q1240.5 434.5 1245 438.0M1329 420.0Q1334.5 425.0 1334.5 430.5Q1334.5 434.5 1329.5 438.5M1334.5 430.5L1337.5 430.5M412.5 430.5L412.5 705M412.5 562.5L447 562.5M460 562.5L1241 562.5M447.5 551.0L447.5 572.0M459.5 551.0L459.5 572.0M442 572.0L464 552.0M1246 552.0Q1240.5 557.0 1240.5 562.5Q1240.5 566.5 1245 570.0M1329 552.0Q1334.5 557.0 1334.5 562.5Q1334.5 566.5 1329.5 570.5M1334.5 562.5L1337.5 562.5M412.5 694.5L447 694.5M460 694.5L1241 694.5M447.5 683.0L447.5 704M459.5 683.0L459.5 704M442 704L464 684.0M1246 684.0Q1240.5 689.0 1240.5 694.5Q1240.5 698.5 1245 702.0M1329 684.0Q1334.5 689.0 1334.5 694.5Q1334.5 698.5 1329.5 702.5M1334.5 694.5L1337.5 694.5" stroke="#000" stroke-width="1" fill="none"/><rect x="743" y="529" width="80" height="130" fill="none" stroke="#00008b" stroke-width="2"/></svg>
<div class="t " style="left:343px;top:135px;font-size:14.67px;color:#f010f0;">单步使能</div>
<div class="t lb" style="left:286px;top:289px;font-size:13px;">(<span style="padding-left:8.5px">131)</span></div>
<div class="t lb" style="left:286px;top:421px;font-size:13px;">(<span style="padding-left:8.5px">132)</span></div>
<div class="t " style="left:1166px;top:290px;font-size:14px;">STL</div>
<div class="t " style="left:1246px;top:290px;font-size:14px;">S101</div>
<div class="t lb" style="left:351px;top:400px;font-size:13px;">M8000</div>
<div class="t lb" style="left:439px;top:400px;font-size:13px;">T100</div>
<div class="t lb" style="left:438px;top:532px;font-size:13px;">X047</div>
<div class="t lb" style="left:439px;top:664px;font-size:13px;">T101</div>
<div class="t lb" style="left:1248px;top:420px;font-size:13px;">Y033</div>
<div class="t lb" style="left:1248px;top:552px;font-size:13px;">T100</div>
<div class="t lb" style="left:1248px;top:684px;font-size:13px;">Y032</div>
<div class="t lb" style="left:1275px;top:532px;font-size:13px;">K30</div>
<div class="t gc" style="left:1252px;top:307px;font-size:14.67px;line-height:21px">平头上料<br>2</div>
<div class="t gc" style="left:334px;top:440px;font-size:14.67px;line-height:21px"><span style="letter-spacing:.55px">RUN</span>监视常<br>开触点</div>
<div class="t gc" style="left:418px;top:440px;font-size:14.67px;line-height:21px">平头螺丝<br>左右报警</div>
<div class="t gc" style="left:1243px;top:440px;font-size:14.67px;line-height:21px">平头左右<br>气缸</div>
<div class="t gc" style="left:418px;top:572px;font-size:14.67px;line-height:21px">平头左右<br>到位</div>
<div class="t gc" style="left:1243px;top:572px;font-size:14.67px;line-height:21px">平头螺丝<br>左右报警</div>
<div class="a " style="left:1346px;top:132px;width:17px;height:573px;background:#f0f0f0;"></div>
<svg style="left:1350px;top:138px;" width="9" height="6" viewBox="0 0 9 6"><path d="M0 5l4.500-4.500 4.500 4.500z" fill="#505050"/></svg>
<svg style="left:1350px;top:694px;" width="9" height="6" viewBox="0 0 9 6"><path d="M0 0l4.500 4.500 4.500-4.500z" fill="#505050"/></svg>
<div class="a " style="left:1347px;top:316px;width:15px;height:15px;background:linear-gradient(90deg,#f6f6f6 0,#e4e4e4 45%,#cfcfcf 50%,#dcdcdc 100%);border:1px solid #979797;border-radius:3px"></div>
<!-- status.status -->
<div class="a " style="left:0px;top:708px;width:1366px;height:20px;background:#f0eeee;"></div>
<div class="t " style="left:322px;top:714px;font-size:12px;color:#000;">简体中文</div>
<div class="t " style="left:420px;top:714px;font-size:12px;color:#000;">简单</div>
<div class="t " style="left:508px;top:714px;font-size:12px;color:#000;">sxh</div>
<div class="t " style="left:756px;top:714px;font-size:12px;color:#000;">FX3U/FX3UC</div>
<div class="t " style="left:864px;top:714px;font-size:12px;color:#000;">本站</div>
<div class="t " style="left:1072px;top:714px;font-size:12px;color:#000;">(138/381步)</div>
<div class="t " style="left:1240px;top:714px;font-size:12px;color:#000;">改写</div>
<div class="t " style="left:1298px;top:714px;font-size:12px;color:#b4aca4;">大写</div>
<div class="t " style="left:1334px;top:714px;font-size:12px;color:#000;">数字</div>
<div class="a " style="left:318px;top:710px;width:1px;height:17px;background:#c8c4c0;"></div>
<div class="a " style="left:416px;top:710px;width:1px;height:17px;background:#c8c4c0;"></div>
<div class="a " style="left:504px;top:710px;width:1px;height:17px;background:#c8c4c0;"></div>
<div class="a " style="left:752px;top:710px;width:1px;height:17px;background:#c8c4c0;"></div>
<div class="a " style="left:860px;top:710px;width:1px;height:17px;background:#c8c4c0;"></div>
<div class="a " style="left:1068px;top:710px;width:1px;height:17px;background:#c8c4c0;"></div>
<div class="a " style="left:1234px;top:710px;width:1px;height:17px;background:#c8c4c0;"></div>
<div class="a " style="left:1293px;top:710px;width:1px;height:17px;background:#c8c4c0;"></div>
<div class="a " style="left:1329px;top:710px;width:1px;height:17px;background:#c8c4c0;"></div>
<!-- taskbar.taskbar -->
<div class="a " style="left:0px;top:728px;width:1366px;height:40px;background:#8294ab;border-top:1px solid #343e4c;box-shadow:inset 0 1px 0 #a9bcd2"></div>
<svg style="left:7px;top:729px;" width="40" height="39" viewBox="0 0 40 39"><defs><radialGradient id="orb" cx=".5" cy=".35" r=".7"><stop offset="0" stop-color="#7fc0f0"/><stop offset=".5" stop-color="#2a6cb8"/><stop offset="1" stop-color="#123a78"/></radialGradient></defs><circle cx="20" cy="19" r="18" fill="url(#orb)" stroke="#1a3050" stroke-width="1.200"/><circle cx="20" cy="19" r="16.500" fill="none" stroke="#9fd0f8" stroke-width="1" opacity=".7"/><path d="M11 12q4-2.500 8-.5l-1.500 7q-4-2-8 .5z" fill="#f05a28"/><path d="M20.500 11.500q4 1.500 8.500-.5l-1.500 7.500q-4.500 2-8.500 .5z" fill="#8cc63e"/><path d="M9.500 20.500q4-2.500 8-.5l-1.500 7q-4-2-8 .5z" fill="#2aa8e8"/><path d="M19 20.500q4 1.500 8.500-.5l-1.500 7.500q-4.500 2-8.500 .5z" fill="#fdc814"/><ellipse cx="20" cy="9" rx="13" ry="7" fill="#fff" opacity=".22"/></svg>
<div class="a tbtn" style="left:60px;top:729px;width:159px;height:39px;"></div>
<svg style="left:69px;top:732px;" width="32" height="32" viewBox="0 0 32 32"><defs><linearGradient id="ieg" x1="0" y1="0" x2="0" y2="1"><stop offset="0" stop-color="#48b4f2"/><stop offset="1" stop-color="#1c80d0"/></linearGradient></defs><circle cx="17" cy="17" r="10.500" fill="none" stroke="url(#ieg)" stroke-width="5.500" stroke-dasharray="55.500 10.500" stroke-dashoffset="-10.500"/><path d="M8 17h21.500" stroke="#2c92dc" stroke-width="4.500"/><path d="M3 29c-6-8 6-26 26-24" fill="none" stroke="#f8c820" stroke-width="2.200"/></svg>
<div class="t tt" style="left:105px;top:742px;font-size:12px;">请教下复位按钮...</div>
<div class="a " style="left:235px;top:732px;width:32px;height:32px;background:linear-gradient(#5cc2fa,#3c9ff0);"></div>
<svg style="left:235px;top:732px;" width="32" height="32" viewBox="0 0 32 32"><defs><mask id="bm"><rect width="32" height="32" fill="#000"/><g fill="#fff"><circle cx="16" cy="12" r="7"/><circle cx="9.500" cy="20" r="6.500"/><circle cx="22.500" cy="20" r="6.500"/><rect x="10" y="22.5" width="12" height="4"/></g><g fill="#000"><circle cx="16" cy="12" r="4"/><circle cx="9.500" cy="20" r="3.600"/><circle cx="22.500" cy="20" r="3.600"/></g></mask></defs><rect width="32" height="32" fill="#fff" mask="url(#bm)"/></svg>
<div class="a tbtn" style="left:283px;top:729px;width:320px;height:39px;"></div>
<div class="a " style="left:442px;top:731px;width:1px;height:36px;background:rgba(60,76,100,.55);box-shadow:1px 0 0 rgba(255,255,255,.25)"></div>
<svg style="left:294px;top:731px;" width="24" height="34" viewBox="0 0 24 34"><defs><linearGradient id="fg294" x1="0" y1="0" x2="1" y2="1"><stop offset="0" stop-color="#fdf3c0"/><stop offset="1" stop-color="#e9cc68"/></linearGradient></defs><path d="M1 2.500L9 0V32.500L1 26.500Z" fill="#f1dc88" stroke="#d8bf68" stroke-width=".5"/><path d="M6 2.500L10 1.500V31L6 29Z" fill="#fffbe2"/><path d="M8 6L22 4.500V28L8 32.500Z" fill="url(#fg294)" stroke="#d4b858" stroke-width=".6"/><rect x="19.500" y="20" width="2.500" height="7" fill="#f4e6a8" stroke="#c8b060" stroke-width=".4"/><rect x="20.300" y="23.500" width="1.200" height="2.500" fill="#4a98e0"/></svg>
<div class="t tt" style="left:329px;top:742px;font-size:12px;">FX3U说明书</div>
<svg style="left:454px;top:731px;" width="24" height="34" viewBox="0 0 24 34"><defs><linearGradient id="fg454" x1="0" y1="0" x2="1" y2="1"><stop offset="0" stop-color="#fdf3c0"/><stop offset="1" stop-color="#e9cc68"/></linearGradient></defs><path d="M1 2.500L9 0V32.500L1 26.500Z" fill="#f1dc88" stroke="#d8bf68" stroke-width=".5"/><path d="M6 2.500L10 1.500V31L6 29Z" fill="#fffbe2"/><path d="M8 6L22 4.500V28L8 32.500Z" fill="url(#fg454)" stroke="#d4b858" stroke-width=".6"/><rect x="19.500" y="20" width="2.500" height="7" fill="#f4e6a8" stroke="#c8b060" stroke-width=".4"/><rect x="20.300" y="23.500" width="1.200" height="2.500" fill="#4a98e0"/></svg>
<div class="t tt" style="left:489px;top:742px;font-size:12px;">松下</div>
<div class="a tbtn" style="left:606px;top:729px;width:158px;height:39px;"></div>
<svg style="left:615px;top:732px;" width="32" height="32" viewBox="0 0 32 32"><defs><clipPath id="pc"><rect width="32" height="32" rx="5"/></clipPath></defs><g clip-path="url(#pc)"><rect width="16" height="17" fill="#f8c820"/><rect x="16" width="16" height="17" fill="#7cd83a"/><rect y="17" width="16" height="15" fill="#e8582a"/><rect x="16" y="17" width="16" height="15" fill="#28a8e0"/></g><text x="16" y="19.5" font-size="14" font-weight="bold" fill="#fff" text-anchor="middle" font-family="Liberation Sans,sans-serif" textLength="29" lengthAdjust="spacingAndGlyphs">PDF</text></svg>
<div class="t tt" style="left:651px;top:742px;font-size:12px;">松下A6说明书.pd...</div>
<div class="a tbtn" style="left:767px;top:729px;width:160px;height:39px;background:linear-gradient(#d8dfe8 0,#bfcad7 45%,#a8b6c8 55%,#b7c3d2 100%);box-shadow:inset 0 0 0 1px rgba(255,255,255,.8)"></div>
<svg style="left:777px;top:732px;" width="32" height="32" viewBox="0 0 32 32"><rect width="32" height="32" rx="2.500" fill="#fb0505"/><path d="M0 0h23l-17 32h-6z" fill="#ff7070" opacity=".85"/><path d="M3 11h14M17 7v8M22.500 7v8M22.500 11h5.500M10.500 11v11h6.500M17 18.500v7.500M22.500 18.500v7.500M22.500 22h5.500" stroke="#fff" stroke-width="2.200" fill="none"/></svg>
<div class="t tt" style="left:814px;top:742px;font-size:12px;">MELSOFT系列 G...</div>
<div class="t " style="left:955px;top:741px;font-size:12.5px;color:#fff;">桌面</div>
<svg style="left:987px;top:737px;" width="17" height="15" viewBox="0 0 17 15"><path d="M.5 13.500v-11h5l1.500 1.500h9v9.500z" fill="#f4d878" stroke="#b89838" stroke-width=".8"/><path d="M2 14v-7h12v7" fill="#fff8d8" stroke="#68a8e0" stroke-width="1.500"/><rect x="5" y="9" width="6" height="5" fill="#58a0e0"/></svg>
<div class="t " style="left:1007px;top:738px;font-size:12.5px;color:#fff;">库</div>
<svg style="left:1097px;top:735px;" width="9" height="6" viewBox="0 0 9 6"><path d="M.5 .5l2.500 2.500-2.500 2.500M4.500 .5l2.500 2.500-2.500 2.500" stroke="#fff" fill="none" stroke-width="1.300"/></svg>
<svg style="left:1114px;top:738px;" width="17" height="17" viewBox="0 0 17 17"><rect x="1" y="1" width="14.5" height="14" rx="3" fill="#f0561c" transform="skewX(-8) translate(2,0)"/><text x="8.5" y="13.5" font-size="15" font-weight="bold" fill="#fff" text-anchor="middle" font-family="Liberation Sans,sans-serif" font-style="italic">S</text></svg>
<svg style="left:1137px;top:738px;" width="16" height="16" viewBox="0 0 16 16"><circle cx="7.500" cy="7.500" r="7" fill="#1838b8" stroke="#dfe8f8" stroke-width="1.200"/><ellipse cx="7.500" cy="5" rx="5" ry="3.500" fill="#6a8ae8" opacity=".6"/><text x="7.500" y="11.500" font-size="10.500" font-weight="bold" fill="#fff" text-anchor="middle" font-family="Liberation Sans,sans-serif">?</text></svg>
<svg style="left:1161px;top:736px;" width="10" height="18" viewBox="0 0 10 18"><path d="M3.500 1h5v3.500h-2M.5 3.500h5v3.500h-5z" fill="none" stroke="#fff"/><path d="M2 13h6l-3 3z" fill="#fff"/></svg>
<svg style="left:1180px;top:741px;" width="16" height="16" viewBox="0 0 16 16"><rect width="16" height="16" rx="1" fill="#d81818"/><path d="M0 0h16l-16 9z" fill="#ff7a7a" opacity=".5"/><path d="M1.500 5.500h7M8.500 3v5M11.500 3v5M11.500 5.500h3M5.500 5.500v5.500h3M8.500 9v4.500M11.500 9v4.500M11.500 11h3" stroke="#fff" stroke-width="1.200" fill="none"/></svg>
<svg style="left:1204px;top:738px;" width="16" height="18" viewBox="0 0 16 18"><path d="M2.500 3.500h8v12h-8z" fill="none" stroke="#fff" stroke-width="1.300"/><path d="M6 1v4M10 1v4" stroke="#fff" stroke-width="1.500"/><path d="M4.500 5h7v4c0 2-1.500 3-3.500 3s-3.500-1-3.500-3z" fill="#fff" stroke="#333" stroke-width=".6"/><path d="M8 12v3h4" stroke="#333" fill="none"/></svg>
<svg style="left:1229px;top:740px;" width="16" height="14" viewBox="0 0 16 14"><path d="M1 13v-2M4 13v-4M7 13v-6.500M10 13v-9M13 13v-12" stroke="#fff" stroke-width="2"/><path d="M0 13.500h15" stroke="#dde" stroke-width=".6"/></svg>
<svg style="left:1253px;top:740px;" width="16" height="18" viewBox="0 0 16 18"><path d="M1 5.5h3l4.500-4.500v15l-4.500-4.500h-3z" fill="#fff" stroke="#5a6a80" stroke-width=".6"/><path d="M10.500 4.500q3 4 0 8" stroke="#fff" fill="none" stroke-width="1.200"/></svg>
<div class="t " style="left:1299px;top:734px;font-size:12.5px;color:#fff;">16:44</div>
<div class="t " style="left:1285px;top:752px;font-size:12.5px;color:#fff;letter-spacing:.25px">2018/3/28</div>
<div class="a " style="left:1352px;top:729px;width:14px;height:39px;background:linear-gradient(90deg,#a9b6c8 0,#8e9eb6 40%,#6f829e 100%);border-left:1px solid #36445a;box-shadow:inset 1px 0 0 #c4cfdc"></div>
</body></html>
